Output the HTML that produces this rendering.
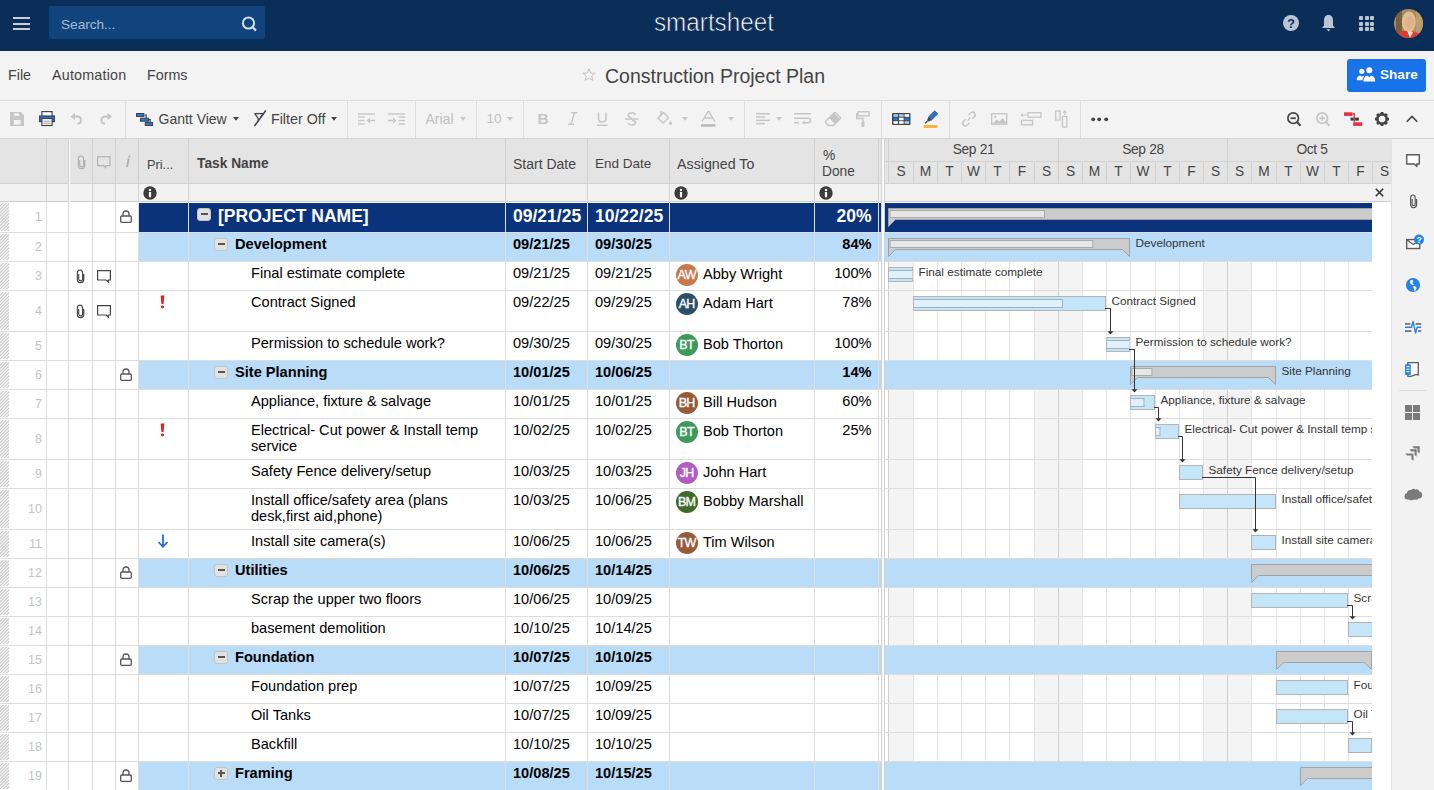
<!DOCTYPE html><html><head><meta charset="utf-8"><style>
*{margin:0;padding:0;box-sizing:border-box}
html,body{width:1434px;height:790px;overflow:hidden;background:#f3f3f3;font-family:"Liberation Sans", sans-serif;}
.a{position:absolute}
.t{position:absolute;white-space:nowrap;}
svg{position:absolute;overflow:visible}
</style></head><body><div style="position:absolute;left:0px;top:0px;width:1434px;height:51px;background:#0a2e58"></div><div style="position:absolute;left:13px;top:17px;width:17px;height:2px;background:#c5ceda"></div><div style="position:absolute;left:13px;top:22.5px;width:17px;height:2px;background:#c5ceda"></div><div style="position:absolute;left:13px;top:28px;width:17px;height:2px;background:#c5ceda"></div><div style="position:absolute;left:49px;top:6px;width:216px;height:33px;background:#11447d;border-radius:2px"></div><div class="t" style="left:61px;top:16px;font-size:13.6px;color:#a9bbd2;line-height:17px">Search...</div><svg style="left:240px;top:15px" width="20" height="20"><circle cx="8.5" cy="8" r="5.6" fill="none" stroke="#d3dbe6" stroke-width="2"/><line x1="12.6" y1="12.2" x2="16" y2="15.6" stroke="#d3dbe6" stroke-width="2.2"/></svg><div class="t" style="left:654px;top:6.82px;font-size:26.5px;color:#ffffff;line-height:30px;transform-origin:0 0;transform:scaleX(0.915);-webkit-text-stroke:0.7px #0a2e58">smartsheet</div><svg style="left:1283px;top:15px" width="16" height="16"><circle cx="8" cy="8" r="8" fill="#b8c5d5"/><text x="8" y="12.6" text-anchor="middle" font-family="Liberation Sans" font-weight="bold" font-size="12.5" fill="#0c2d58">?</text></svg><svg style="left:1321px;top:14px" width="15" height="19"><path d="M7.5 1 C4.2 1 3 3.6 3 6.5 L3 11.5 L1 14 L14 14 L12 11.5 L12 6.5 C12 3.6 10.8 1 7.5 1Z" fill="#b8c5d5"/><path d="M5.5 15.2 L9.5 15.2 L7.5 17.4Z" fill="#b8c5d5"/></svg><div style="position:absolute;left:1359.0px;top:16.0px;width:4px;height:4px;background:#b8c5d5;border-radius:1px"></div><div style="position:absolute;left:1364.7px;top:16.0px;width:4px;height:4px;background:#b8c5d5;border-radius:1px"></div><div style="position:absolute;left:1370.4px;top:16.0px;width:4px;height:4px;background:#b8c5d5;border-radius:1px"></div><div style="position:absolute;left:1359.0px;top:21.6px;width:4px;height:4px;background:#b8c5d5;border-radius:1px"></div><div style="position:absolute;left:1364.7px;top:21.6px;width:4px;height:4px;background:#b8c5d5;border-radius:1px"></div><div style="position:absolute;left:1370.4px;top:21.6px;width:4px;height:4px;background:#b8c5d5;border-radius:1px"></div><div style="position:absolute;left:1359.0px;top:27.2px;width:4px;height:4px;background:#b8c5d5;border-radius:1px"></div><div style="position:absolute;left:1364.7px;top:27.2px;width:4px;height:4px;background:#b8c5d5;border-radius:1px"></div><div style="position:absolute;left:1370.4px;top:27.2px;width:4px;height:4px;background:#b8c5d5;border-radius:1px"></div><svg style="left:1394px;top:8.5px" width="29" height="29"><defs><clipPath id="av"><circle cx="14.5" cy="14.5" r="14.5"/></clipPath></defs><g clip-path="url(#av)"><rect width="29" height="29" fill="#a98b5f"/><rect x="2" y="0" width="6" height="29" fill="#7b5e3e"/><rect x="22" y="0" width="7" height="29" fill="#bd9d6e"/><ellipse cx="14.8" cy="13" rx="7" ry="10.5" fill="#dcc08f"/><ellipse cx="15.8" cy="13.5" rx="4.6" ry="6.2" fill="#e4ae88"/><path d="M2 29 L4.5 23.5 Q9 21 13 22 L15.5 26 L18 22.5 Q23 23 26.5 25 L28 29Z" fill="#e23b35"/><path d="M13.5 22.5 L16 29 L19 23Z" fill="#efe8dc"/></g></svg><div style="position:absolute;left:0px;top:51px;width:1434px;height:49px;background:#f3f3f3"></div><div style="position:absolute;left:0px;top:100px;width:1434px;height:1px;background:#dcdcdc"></div><div class="t" style="left:8px;top:67px;font-size:14.3px;color:#444;line-height:16px;letter-spacing:0px">File</div><div class="t" style="left:52px;top:67px;font-size:14.3px;color:#444;line-height:16px;letter-spacing:0.2px">Automation</div><div class="t" style="left:147px;top:67px;font-size:14.3px;color:#444;line-height:16px;letter-spacing:0px">Forms</div><svg style="left:582px;top:68px" width="14" height="14"><path d="M7 0.8 L8.7 5 L13.2 5.2 L9.7 8 L10.9 12.4 L7 9.9 L3.1 12.4 L4.3 8 L0.8 5.2 L5.3 5Z" fill="none" stroke="#c4c4c4" stroke-width="1"/></svg><div class="t" style="left:605px;top:65px;font-size:19.5px;color:#444;line-height:22px">Construction Project Plan</div><div style="position:absolute;left:1347px;top:59px;width:79px;height:33px;background:#1872e8;border-radius:3px"></div><svg style="left:1356px;top:67px" width="20" height="16"><circle cx="5.8" cy="4.3" r="2.6" fill="#fff"/><path d="M0.6 13.2 Q0.8 9.3 4.2 8.6 L5.8 9.8 L7.2 8.8 Q7.9 9 8.2 9.6 Q6.6 11 6.5 13.2Z" fill="#fff"/><circle cx="13.3" cy="3.2" r="3" fill="#fff"/><path d="M7.4 14.6 Q7.4 9.4 11 8.4 L13.3 10 L15.6 8.4 Q19.2 9.4 19.2 14.6Z" fill="#fff"/></svg><div class="t" style="left:1380px;top:67.29px;font-size:13.6px;font-weight:bold;color:#fff;line-height:16px">Share</div><div style="position:absolute;left:0px;top:101px;width:1434px;height:37px;background:#f3f3f3"></div><div style="position:absolute;left:0px;top:138px;width:1434px;height:1px;background:#d4d4d4"></div><div style="position:absolute;left:125px;top:101px;width:1px;height:37px;background:#dedede"></div><div style="position:absolute;left:347px;top:101px;width:1px;height:37px;background:#dedede"></div><div style="position:absolute;left:415px;top:101px;width:1px;height:37px;background:#dedede"></div><div style="position:absolute;left:476px;top:101px;width:1px;height:37px;background:#dedede"></div><div style="position:absolute;left:523px;top:101px;width:1px;height:37px;background:#dedede"></div><div style="position:absolute;left:744px;top:101px;width:1px;height:37px;background:#dedede"></div><div style="position:absolute;left:881px;top:101px;width:1px;height:37px;background:#dedede"></div><div style="position:absolute;left:949px;top:101px;width:1px;height:37px;background:#dedede"></div><div style="position:absolute;left:1080px;top:101px;width:1px;height:37px;background:#dedede"></div><svg style="left:10px;top:112px" width="15" height="14"><path d="M0 0 H11 L14 3 V14 H0Z" fill="#c6c6c6"/><rect x="4" y="1.3" width="5" height="2.6" fill="#f3f3f3"/><rect x="3.8" y="8" width="6.7" height="4.7" fill="#f3f3f3"/></svg><svg style="left:39px;top:111px" width="16" height="15"><rect x="2.9" y="0.6" width="10.2" height="5" fill="#fff" stroke="#444444" stroke-width="1.2"/><rect x="0.6" y="5" width="14.8" height="5.6" fill="#1f77e0" stroke="#444444" stroke-width="1.2"/><rect x="2.9" y="7.5" width="10.2" height="7" fill="#fff" stroke="#444444" stroke-width="1.2"/><rect x="4.5" y="9.7" width="7" height="1" fill="#999"/><rect x="4.5" y="11.7" width="7" height="1" fill="#999"/></svg><svg style="left:70px;top:113px" width="13" height="12"><path d="M4.5 3.5 H7 Q11 3.5 11 7 Q11 10.5 7.5 10.8" fill="none" stroke="#c6c6c6" stroke-width="2"/><path d="M0.5 3.5 L5 0 V7Z" fill="#c6c6c6"/></svg><svg style="left:100px;top:113px" width="13" height="12"><path d="M8 3.5 H5.5 Q1.5 3.5 1.5 7 Q1.5 10.5 5 10.8" fill="none" stroke="#c6c6c6" stroke-width="2"/><path d="M12 3.5 L7.5 0 V7Z" fill="#c6c6c6"/></svg><svg style="left:136px;top:113px" width="17" height="13"><rect x="0.5" y="0.5" width="7.3" height="3" fill="#1f77e0" stroke="#444444" stroke-width="1"/><rect x="4.5" y="5.2" width="8" height="3" fill="#1f77e0" stroke="#444444" stroke-width="1"/><rect x="9.3" y="9.5" width="7.3" height="3" fill="#1f77e0" stroke="#444444" stroke-width="1"/><path d="M8.2 2 H10.2 V5 M12.8 6.7 H14.2 V9.5" fill="none" stroke="#444444" stroke-width="1.2"/></svg><div class="t" style="left:158.5px;top:111.15px;font-size:14px;line-height:16px;color:#444444">Gantt View</div><svg style="left:232.5px;top:117px" width="6" height="4"><path d="M0 0 H6 L3 3.8Z" fill="#444444"/></svg><svg style="left:253px;top:110px" width="14" height="17"><path d="M1.5 3.6 H10.5" fill="none" stroke="#444444" stroke-width="1.3"/><path d="M1.8 3.6 L5.2 8.5 V12" fill="none" stroke="#444444" stroke-width="1.3"/><path d="M10.3 3.6 L7.6 7.5" fill="none" stroke="#444444" stroke-width="1.3"/><path d="M12.8 0.5 L1.5 16" stroke="#444444" stroke-width="1.5"/></svg><div class="t" style="left:271px;top:111.06px;font-size:14.25px;line-height:16px;color:#444444">Filter Off</div><svg style="left:330.5px;top:117px" width="6" height="4"><path d="M0 0 H6 L3 3.8Z" fill="#444444"/></svg><svg style="left:358px;top:113px" width="18" height="12"><rect x="0" y="0.3" width="17" height="1.4" fill="#c6c6c6"/><rect x="0" y="3.3" width="6.5" height="1.4" fill="#c6c6c6"/><rect x="0" y="6.8" width="6.5" height="1.4" fill="#c6c6c6"/><rect x="0" y="10.3" width="6.5" height="1.4" fill="#c6c6c6"/><path d="M8.5 7.5 L12 4.5 V10.5Z M11.5 6.8 H17 V8.2 H11.5Z" fill="#c6c6c6"/></svg><svg style="left:388px;top:113px" width="18" height="12"><rect x="0" y="0.3" width="17" height="1.4" fill="#c6c6c6"/><rect x="10.5" y="3.3" width="6.5" height="1.4" fill="#c6c6c6"/><rect x="10.5" y="6.8" width="6.5" height="1.4" fill="#c6c6c6"/><rect x="10.5" y="10.3" width="6.5" height="1.4" fill="#c6c6c6"/><path d="M8.5 7.5 L5 4.5 V10.5Z M0 6.8 H5.5 V8.2 H0Z" fill="#c6c6c6"/></svg><div class="t" style="left:425.5px;top:111.15px;font-size:14px;line-height:16px;color:#c0c0c0">Arial</div><svg style="left:459.5px;top:117px" width="6" height="4"><path d="M0 0 H6 L3 3.8Z" fill="#c6c6c6"/></svg><div class="t" style="left:486.5px;top:111.32px;font-size:13.5px;line-height:16px;color:#c0c0c0">10</div><svg style="left:506.5px;top:117px" width="6" height="4"><path d="M0 0 H6 L3 3.8Z" fill="#c6c6c6"/></svg><div class="t" style="left:537.5px;top:110.5px;font-size:15.5px;line-height:16px;color:#c6c6c6;font-weight:bold">B</div><svg style="left:567px;top:112px" width="11" height="13"><path d="M4.5 0.7 H10.5 M1 12.3 H7 M7.5 0.7 L4 12.3" fill="none" stroke="#c6c6c6" stroke-width="1.4"/></svg><svg style="left:597px;top:112px" width="11" height="15"><path d="M1.5 0.5 V6.5 Q1.5 10 5.2 10 Q9 10 9 6.5 V0.5" fill="none" stroke="#c6c6c6" stroke-width="1.5"/><rect x="0" y="12.5" width="10.5" height="1.5" fill="#c6c6c6"/></svg><svg style="left:625px;top:112px" width="14" height="14"><path d="M10.5 2.5 Q9.5 0.8 7 0.8 Q3.2 0.8 3.2 3.3 Q3.2 5.5 7 6 M7 8.2 Q10.6 8.7 10.6 10.5 Q10.6 12.9 7 12.9 Q4 12.9 3 11" fill="none" stroke="#c6c6c6" stroke-width="1.5"/><rect x="0" y="6.4" width="13.5" height="1.4" fill="#c6c6c6"/></svg><svg style="left:656px;top:110px" width="17" height="16"><path d="M2 8 L7.5 2.5 L12.5 7.5 L7 13Z" fill="none" stroke="#c6c6c6" stroke-width="1.5"/><path d="M5 1 V6" stroke="#c6c6c6" stroke-width="1.5"/><path d="M14.5 10.5 Q16 12.5 16 13.3 A1.5 1.5 0 0 1 13 13.3 Q13 12.5 14.5 10.5Z" fill="#c6c6c6"/></svg><svg style="left:682px;top:117px" width="6" height="4"><path d="M0 0 H6 L3 3.8Z" fill="#c6c6c6"/></svg><svg style="left:701px;top:111px" width="15" height="17"><path d="M1 10.5 L6.8 0.8 H8 L13.8 10.5 M3.3 7 H11.5" fill="none" stroke="#c6c6c6" stroke-width="1.4"/><rect x="0" y="13.2" width="14.5" height="2.5" fill="#b8b8b8"/></svg><svg style="left:728px;top:117px" width="6" height="4"><path d="M0 0 H6 L3 3.8Z" fill="#c6c6c6"/></svg><svg style="left:756px;top:113px" width="15" height="12"><rect x="0" y="0" width="14" height="1.5" fill="#c6c6c6"/><rect x="0" y="3.3" width="9" height="1.5" fill="#c6c6c6"/><rect x="0" y="6.6" width="14" height="1.5" fill="#c6c6c6"/><rect x="0" y="9.9" width="9" height="1.5" fill="#c6c6c6"/></svg><svg style="left:776px;top:117px" width="6" height="4"><path d="M0 0 H6 L3 3.8Z" fill="#c6c6c6"/></svg><svg style="left:794px;top:113px" width="19" height="12"><rect x="0" y="0" width="17" height="1.5" fill="#c6c6c6"/><rect x="0" y="4.5" width="11" height="1.5" fill="#c6c6c6"/><rect x="0" y="9" width="5" height="1.5" fill="#c6c6c6"/><path d="M11 5.2 H14 Q16.7 5.2 16.7 7.5 Q16.7 9.8 14 9.8 H9" fill="none" stroke="#c6c6c6" stroke-width="1.4"/><path d="M8 9.8 L10.5 7.5 V12Z" fill="#c6c6c6"/></svg><svg style="left:825px;top:111px" width="17" height="16"><path d="M1 10 L9 2 Q10 1 11 2 L15 6 Q16 7 15 8 L8.5 14.5 H3.5 L1 12 Q0 11 1 10Z" fill="none" stroke="#c6c6c6" stroke-width="1.4"/><path d="M9 2 L15 8 L10 13 L4 7Z" fill="#c6c6c6"/></svg><svg style="left:856px;top:111px" width="14" height="16"><rect x="2" y="0.8" width="11" height="4" fill="none" stroke="#c6c6c6" stroke-width="1.4"/><path d="M2 3 H0.7 V7.5 H7 V10" fill="none" stroke="#c6c6c6" stroke-width="1.4"/><rect x="5.5" y="10" width="3" height="6" rx="1" fill="#c6c6c6"/></svg><svg style="left:892px;top:113px" width="19" height="12"><rect x="0" y="0" width="18.5" height="12" rx="1" fill="#444444"/><rect x="1.4" y="1.2" width="4.6" height="2.6" fill="#a7cdf2"/><rect x="7" y="1.2" width="4.6" height="2.6" fill="#a7cdf2"/><rect x="12.6" y="1.2" width="4.6" height="2.6" fill="#fff"/><rect x="1.4" y="4.7" width="4.6" height="2.6" fill="#1f77e0"/><rect x="7" y="4.7" width="4.6" height="2.6" fill="#fff"/><rect x="12.6" y="4.7" width="4.6" height="2.6" fill="#1f77e0"/><rect x="1.4" y="8.2" width="4.6" height="2.6" fill="#fff"/><rect x="7" y="8.2" width="4.6" height="2.6" fill="#fff"/><rect x="12.6" y="8.2" width="4.6" height="2.6" fill="#a7cdf2"/></svg><svg style="left:923px;top:110px" width="15" height="18"><path d="M11.6 1 L14.6 3.8 L8.2 10.2 L5.2 7.4Z" fill="#1f77e0" stroke="#444444" stroke-width="1" stroke-linejoin="round"/><path d="M5.2 7.4 L8.2 10.2 L6.4 11.2 L4.2 11.6 L4.4 9.4Z" fill="#444444"/><path d="M4.3 11.2 L2 13.2" stroke="#444444" stroke-width="1.2"/><rect x="0.5" y="15" width="14" height="3" rx="1" fill="#f5b53f"/></svg><svg style="left:961px;top:111px" width="16" height="16"><path d="M6.5 9.5 L9.5 6.5" stroke="#c6c6c6" stroke-width="1.5"/><path d="M7.6 4 L9.8 1.8 Q11.5 0.1 13.4 1.9 Q15.2 3.8 13.5 5.5 L11.3 7.7" fill="none" stroke="#c6c6c6" stroke-width="1.5"/><path d="M8.4 12 L6.2 14.2 Q4.5 15.9 2.6 14.1 Q0.8 12.2 2.5 10.5 L4.7 8.3" fill="none" stroke="#c6c6c6" stroke-width="1.5"/></svg><svg style="left:991px;top:113px" width="17" height="12"><rect x="0.7" y="0.7" width="15" height="10.5" fill="none" stroke="#c6c6c6" stroke-width="1.4"/><circle cx="4.3" cy="3.8" r="1.2" fill="#c6c6c6"/><path d="M1.5 10.5 L6 6.5 L8.5 8.5 L11.5 5 L15 9 V10.5Z" fill="#c6c6c6"/></svg><svg style="left:1020px;top:112px" width="22" height="14"><rect x="8" y="0.7" width="13" height="4.5" fill="none" stroke="#c6c6c6" stroke-width="1.3"/><rect x="1.5" y="8.3" width="11" height="4.5" fill="none" stroke="#c6c6c6" stroke-width="1.3"/><path d="M0.5 3 L3 1 V5Z M2.5 2.4 H7 V3.6 H2.5Z" fill="#c6c6c6"/></svg><svg style="left:1055px;top:110px" width="13" height="18"><rect x="0.7" y="1" width="4.3" height="9" fill="none" stroke="#c6c6c6" stroke-width="1.3"/><rect x="7.5" y="6.5" width="4.3" height="10.5" fill="none" stroke="#c6c6c6" stroke-width="1.3"/><path d="M9.7 0 L12 2.8 H7.4Z M9.1 2.5 H10.3 V5 H9.1Z" fill="#c6c6c6"/></svg><svg style="left:1091.0px;top:117px" width="5" height="5"><circle cx="2.2" cy="2.3" r="1.9" fill="#444444"/></svg><svg style="left:1097.3px;top:117px" width="5" height="5"><circle cx="2.2" cy="2.3" r="1.9" fill="#444444"/></svg><svg style="left:1103.6px;top:117px" width="5" height="5"><circle cx="2.2" cy="2.3" r="1.9" fill="#444444"/></svg><svg style="left:1287px;top:112px" width="15" height="16"><circle cx="6.2" cy="6.2" r="5.3" fill="none" stroke="#444444" stroke-width="1.7"/><rect x="3.5" y="5.4" width="5.4" height="1.7" fill="#444444"/><path d="M10 10 L13.5 13.8" stroke="#444444" stroke-width="2"/></svg><svg style="left:1316px;top:112px" width="15" height="16"><circle cx="6.2" cy="6.2" r="5.3" fill="none" stroke="#c6c6c6" stroke-width="1.7"/><rect x="3.5" y="5.4" width="5.4" height="1.7" fill="#c6c6c6"/><rect x="5.35" y="3.5" width="1.7" height="5.4" fill="#c6c6c6"/><path d="M10 10 L13.5 13.8" stroke="#c6c6c6" stroke-width="2"/></svg><svg style="left:1344px;top:112px" width="19" height="15"><rect x="0" y="0.3" width="8.5" height="3.6" fill="#e8303f"/><rect x="6.5" y="5.6" width="8.5" height="3" fill="#444444"/><rect x="9.2" y="10.3" width="9" height="3.6" fill="#e8303f"/><path d="M8.5 2 H10.3 V10.5" fill="none" stroke="#e8303f" stroke-width="1.3"/></svg><svg style="left:1375px;top:112px" width="14" height="14"><rect x="5.6" y="0" width="2.8" height="3.5" fill="#444444" transform="rotate(0 7 7)"/><rect x="5.6" y="0" width="2.8" height="3.5" fill="#444444" transform="rotate(45 7 7)"/><rect x="5.6" y="0" width="2.8" height="3.5" fill="#444444" transform="rotate(90 7 7)"/><rect x="5.6" y="0" width="2.8" height="3.5" fill="#444444" transform="rotate(135 7 7)"/><rect x="5.6" y="0" width="2.8" height="3.5" fill="#444444" transform="rotate(180 7 7)"/><rect x="5.6" y="0" width="2.8" height="3.5" fill="#444444" transform="rotate(225 7 7)"/><rect x="5.6" y="0" width="2.8" height="3.5" fill="#444444" transform="rotate(270 7 7)"/><rect x="5.6" y="0" width="2.8" height="3.5" fill="#444444" transform="rotate(315 7 7)"/><circle cx="7" cy="7" r="4.8" fill="none" stroke="#444444" stroke-width="2.4"/></svg><svg style="left:1406px;top:115px" width="12" height="8"><path d="M0.8 6.8 L6 1.5 L11.2 6.8" fill="none" stroke="#444444" stroke-width="1.6"/></svg><div style="position:absolute;left:0px;top:139px;width:881px;height:44px;background:#e4e4e4"></div><div style="position:absolute;left:0px;top:183px;width:881px;height:1px;background:#d2d2d2"></div><div style="position:absolute;left:0px;top:184px;width:881px;height:17px;background:#f2f2f2"></div><div style="position:absolute;left:0px;top:201px;width:881px;height:1px;background:#cdcdcd"></div><div style="position:absolute;left:46px;top:139px;width:1px;height:62px;background:#d2d2d2"></div><div style="position:absolute;left:68px;top:139px;width:1px;height:62px;background:#d2d2d2"></div><div style="position:absolute;left:92px;top:139px;width:1px;height:62px;background:#d2d2d2"></div><div style="position:absolute;left:115px;top:139px;width:1px;height:62px;background:#d2d2d2"></div><div style="position:absolute;left:138px;top:139px;width:1px;height:62px;background:#d2d2d2"></div><div style="position:absolute;left:188px;top:139px;width:1px;height:62px;background:#d2d2d2"></div><div style="position:absolute;left:505px;top:139px;width:1px;height:62px;background:#d2d2d2"></div><div style="position:absolute;left:587px;top:139px;width:1px;height:62px;background:#d2d2d2"></div><div style="position:absolute;left:669px;top:139px;width:1px;height:62px;background:#d2d2d2"></div><div style="position:absolute;left:814px;top:139px;width:1px;height:62px;background:#d2d2d2"></div><div style="position:absolute;left:878px;top:139px;width:1px;height:62px;background:#d2d2d2"></div><div style="position:absolute;left:69px;top:139px;width:1px;height:651px;background:#ffffff"></div><div class="t" style="left:147px;top:156.58px;font-size:12.75px;line-height:16px;color:#444;font-weight:normal;">Pri...</div><div class="t" style="left:197px;top:156.24px;font-size:13.75px;line-height:16px;color:#444;font-weight:bold;">Task Name</div><div class="t" style="left:513px;top:156.15px;font-size:14px;line-height:16px;color:#444;font-weight:normal;">Start Date</div><div class="t" style="left:595px;top:156.32px;font-size:13.5px;line-height:16px;color:#444;font-weight:normal;">End Date</div><div class="t" style="left:677px;top:156.06px;font-size:14.25px;line-height:16px;color:#444;font-weight:normal;">Assigned To</div><div class="t" style="left:823px;top:148.24px;font-size:13.75px;line-height:16px;color:#444;font-weight:normal;">%</div><div class="t" style="left:822px;top:164.24px;font-size:13.75px;line-height:16px;color:#444;font-weight:normal;">Done</div><svg style="left:143px;top:186px" width="14" height="14"><circle cx="7" cy="7" r="6.7" fill="#3c3c3c"/><circle cx="7" cy="3.9" r="1.2" fill="#fff"/><rect x="5.9" y="5.9" width="2.2" height="5.4" fill="#fff"/></svg><svg style="left:674px;top:186px" width="14" height="14"><circle cx="7" cy="7" r="6.7" fill="#3c3c3c"/><circle cx="7" cy="3.9" r="1.2" fill="#fff"/><rect x="5.9" y="5.9" width="2.2" height="5.4" fill="#fff"/></svg><svg style="left:819px;top:186px" width="14" height="14"><circle cx="7" cy="7" r="6.7" fill="#3c3c3c"/><circle cx="7" cy="3.9" r="1.2" fill="#fff"/><rect x="5.9" y="5.9" width="2.2" height="5.4" fill="#fff"/></svg><svg style="left:76.5px;top:154.5px" width="10" height="15"><path d="M7.8 5 V10.3 Q7.8 13.6 4.6 13.6 Q1.3 13.6 1.3 10.3 V4.2 Q1.3 1 4 1 Q6.6 1 6.6 4.2 V10 Q6.6 11.9 4.6 11.9 Q2.7 11.9 2.7 10 V5" fill="none" stroke="#b0b0b0" stroke-width="1.15"/></svg><svg style="left:97px;top:156px" width="14" height="13"><path d="M0.6 0.6 H12.9 V9.6 H9.1 L8.4 11.8 L6.7 9.6 H0.6Z" fill="none" stroke="#b4b4b4" stroke-width="1.2"/></svg><svg style="left:124px;top:155px" width="7" height="12"><path d="M4.6 4.2 L3.2 11.2" stroke="#b0b0b0" stroke-width="1.9" stroke-linecap="round"/><circle cx="5.3" cy="1.5" r="1.1" fill="#b0b0b0"/></svg><div style="position:absolute;left:0px;top:202px;width:881px;height:30px;background:#fff"></div><div style="position:absolute;left:139px;top:203px;width:742px;height:29px;background:#0a337b"></div><div style="position:absolute;left:0px;top:232px;width:881px;height:1px;background:#dddddd"></div><svg style="left:0;top:203px;overflow:hidden" width="9" height="28"><path d="M-1 1.00 L1.00 -1 M-1 4.25 L4.25 -1 M-1 7.50 L7.50 -1 M-1 10.75 L10.75 -1 M-1 14.00 L14.00 -1 M-1 17.25 L17.25 -1 M-1 20.50 L20.50 -1 M-1 23.75 L23.75 -1 M-1 27.00 L27.00 -1 M-1 30.25 L30.25 -1 M-1 33.50 L33.50 -1 M-1 36.75 L36.75 -1 M-1 40.00 L40.00 -1 M-1 43.25 L43.25 -1 " stroke="#cecece" stroke-width="1.25" fill="none"/></svg><div class="t" style="left:0px;width:42px;text-align:right;top:210.7px;font-size:12.5px;line-height:13px;color:#c4c4c4">1</div><div style="position:absolute;left:46px;top:202px;width:1px;height:30px;background:#dddddd"></div><div style="position:absolute;left:68px;top:202px;width:1px;height:30px;background:#dddddd"></div><div style="position:absolute;left:92px;top:202px;width:1px;height:30px;background:#dddddd"></div><div style="position:absolute;left:115px;top:202px;width:1px;height:30px;background:#dddddd"></div><div style="position:absolute;left:138px;top:202px;width:1px;height:30px;background:#dddddd"></div><div style="position:absolute;left:188px;top:202px;width:1px;height:30px;background:#dddddd"></div><div style="position:absolute;left:505px;top:202px;width:1px;height:30px;background:#dddddd"></div><div style="position:absolute;left:587px;top:202px;width:1px;height:30px;background:#dddddd"></div><div style="position:absolute;left:669px;top:202px;width:1px;height:30px;background:#dddddd"></div><div style="position:absolute;left:814px;top:202px;width:1px;height:30px;background:#dddddd"></div><div style="position:absolute;left:878px;top:202px;width:1px;height:30px;background:#dddddd"></div><div class="t" style="left:218px;top:207.94px;font-size:17.5px;line-height:16px;color:#fff;font-weight:bold;">[PROJECT NAME]</div><div class="t" style="left:513px;top:207.94px;font-size:17.5px;line-height:16px;color:#fff;font-weight:bold;">09/21/25</div><div class="t" style="left:595px;top:207.94px;font-size:17.5px;line-height:16px;color:#fff;font-weight:bold;">10/22/25</div><div class="t" style="left:815px;width:56.5px;text-align:right;top:207.94px;font-size:17.5px;line-height:16px;color:#fff;font-weight:bold">20%</div><div style="position:absolute;left:197px;top:208px;width:14px;height:13px;background:#e2e2e2;border:1px solid #c4c4c4;border-radius:3px"><div style="position:absolute;left:2.5px;top:4.2px;width:7px;height:2px;background:#555"></div></div><svg style="left:120px;top:210.0px" width="12" height="13"><path d="M3 6 V4 Q3 1 6 1 Q9 1 9 4 V6" fill="none" stroke="#555" stroke-width="1.3"/><rect x="0.7" y="6" width="10.6" height="6.3" rx="1" fill="none" stroke="#555" stroke-width="1.3"/></svg><div style="position:absolute;left:0px;top:233px;width:881px;height:28px;background:#fff"></div><div style="position:absolute;left:139px;top:233px;width:742px;height:28px;background:#b9dcf9"></div><div style="position:absolute;left:0px;top:261px;width:881px;height:1px;background:#dddddd"></div><svg style="left:0;top:234px;overflow:hidden" width="9" height="26"><path d="M-1 1.00 L1.00 -1 M-1 4.25 L4.25 -1 M-1 7.50 L7.50 -1 M-1 10.75 L10.75 -1 M-1 14.00 L14.00 -1 M-1 17.25 L17.25 -1 M-1 20.50 L20.50 -1 M-1 23.75 L23.75 -1 M-1 27.00 L27.00 -1 M-1 30.25 L30.25 -1 M-1 33.50 L33.50 -1 M-1 36.75 L36.75 -1 M-1 40.00 L40.00 -1 " stroke="#cecece" stroke-width="1.25" fill="none"/></svg><div class="t" style="left:0px;width:42px;text-align:right;top:240.7px;font-size:12.5px;line-height:13px;color:#c4c4c4">2</div><div style="position:absolute;left:46px;top:233px;width:1px;height:28px;background:#dddddd"></div><div style="position:absolute;left:68px;top:233px;width:1px;height:28px;background:#dddddd"></div><div style="position:absolute;left:92px;top:233px;width:1px;height:28px;background:#dddddd"></div><div style="position:absolute;left:115px;top:233px;width:1px;height:28px;background:#dddddd"></div><div style="position:absolute;left:138px;top:233px;width:1px;height:28px;background:#dddddd"></div><div style="position:absolute;left:188px;top:233px;width:1px;height:28px;background:#dddddd"></div><div style="position:absolute;left:505px;top:233px;width:1px;height:28px;background:#dddddd"></div><div style="position:absolute;left:587px;top:233px;width:1px;height:28px;background:#dddddd"></div><div style="position:absolute;left:669px;top:233px;width:1px;height:28px;background:#dddddd"></div><div style="position:absolute;left:814px;top:233px;width:1px;height:28px;background:#dddddd"></div><div style="position:absolute;left:878px;top:233px;width:1px;height:28px;background:#dddddd"></div><div class="t" style="left:235px;top:235.54px;font-size:14.6px;line-height:16px;color:#000;font-weight:bold;">Development</div><div class="t" style="left:513px;top:235.54px;font-size:14.6px;line-height:16px;color:#000;font-weight:bold;">09/21/25</div><div class="t" style="left:595px;top:235.54px;font-size:14.6px;line-height:16px;color:#000;font-weight:bold;">09/30/25</div><div class="t" style="left:815px;width:56.5px;text-align:right;top:235.54px;font-size:14.6px;line-height:16px;color:#000;font-weight:bold">84%</div><div style="position:absolute;left:214px;top:238px;width:14px;height:13px;background:#e2e2e2;border:1px solid #c4c4c4;border-radius:3px"><div style="position:absolute;left:2.5px;top:4.2px;width:7px;height:2px;background:#555"></div></div><div style="position:absolute;left:0px;top:262px;width:881px;height:28px;background:#fff"></div><div style="position:absolute;left:0px;top:290px;width:881px;height:1px;background:#dddddd"></div><svg style="left:0;top:263px;overflow:hidden" width="9" height="26"><path d="M-1 1.00 L1.00 -1 M-1 4.25 L4.25 -1 M-1 7.50 L7.50 -1 M-1 10.75 L10.75 -1 M-1 14.00 L14.00 -1 M-1 17.25 L17.25 -1 M-1 20.50 L20.50 -1 M-1 23.75 L23.75 -1 M-1 27.00 L27.00 -1 M-1 30.25 L30.25 -1 M-1 33.50 L33.50 -1 M-1 36.75 L36.75 -1 M-1 40.00 L40.00 -1 " stroke="#cecece" stroke-width="1.25" fill="none"/></svg><div class="t" style="left:0px;width:42px;text-align:right;top:269.7px;font-size:12.5px;line-height:13px;color:#c4c4c4">3</div><div style="position:absolute;left:46px;top:262px;width:1px;height:28px;background:#dddddd"></div><div style="position:absolute;left:68px;top:262px;width:1px;height:28px;background:#dddddd"></div><div style="position:absolute;left:92px;top:262px;width:1px;height:28px;background:#dddddd"></div><div style="position:absolute;left:115px;top:262px;width:1px;height:28px;background:#dddddd"></div><div style="position:absolute;left:138px;top:262px;width:1px;height:28px;background:#dddddd"></div><div style="position:absolute;left:188px;top:262px;width:1px;height:28px;background:#dddddd"></div><div style="position:absolute;left:505px;top:262px;width:1px;height:28px;background:#dddddd"></div><div style="position:absolute;left:587px;top:262px;width:1px;height:28px;background:#dddddd"></div><div style="position:absolute;left:669px;top:262px;width:1px;height:28px;background:#dddddd"></div><div style="position:absolute;left:814px;top:262px;width:1px;height:28px;background:#dddddd"></div><div style="position:absolute;left:878px;top:262px;width:1px;height:28px;background:#dddddd"></div><div class="t" style="left:251px;top:265.34px;font-size:14.6px;line-height:16px;color:#000;font-weight:normal;">Final estimate complete</div><div class="t" style="left:513px;top:265.34px;font-size:14.6px;line-height:16px;color:#000;font-weight:normal;">09/21/25</div><div class="t" style="left:595px;top:265.34px;font-size:14.6px;line-height:16px;color:#000;font-weight:normal;">09/21/25</div><div class="t" style="left:815px;width:56.5px;text-align:right;top:265.34px;font-size:14.6px;line-height:16px;color:#000;font-weight:normal">100%</div><div class="a" style="left:676px;top:264px;width:22px;height:22px;border-radius:50%;background:#c8774d;color:#fff;font-size:12.5px;line-height:22px;text-align:center;letter-spacing:-0.7px;text-indent:-0.7px;-webkit-text-stroke:0.35px #fff">AW</div><div class="t" style="left:703px;top:266.14px;font-size:14.6px;line-height:16px;color:#000;font-weight:normal;">Abby Wright</div><svg style="left:76px;top:269.0px" width="10" height="15"><path d="M7.8 5 V10.3 Q7.8 13.6 4.6 13.6 Q1.3 13.6 1.3 10.3 V4.2 Q1.3 1 4 1 Q6.6 1 6.6 4.2 V10 Q6.6 11.9 4.6 11.9 Q2.7 11.9 2.7 10 V5" fill="none" stroke="#444" stroke-width="1.15"/></svg><svg style="left:97px;top:269.5px" width="15" height="14"><path d="M0.6 0.6 H13.4 V10 H11.2 L11.6 12.4 L9 10 H0.6Z" fill="none" stroke="#444" stroke-width="1.2" stroke-linejoin="round"/></svg><div style="position:absolute;left:0px;top:291px;width:881px;height:40px;background:#fff"></div><div style="position:absolute;left:0px;top:331px;width:881px;height:1px;background:#dddddd"></div><svg style="left:0;top:292px;overflow:hidden" width="9" height="38"><path d="M-1 1.00 L1.00 -1 M-1 4.25 L4.25 -1 M-1 7.50 L7.50 -1 M-1 10.75 L10.75 -1 M-1 14.00 L14.00 -1 M-1 17.25 L17.25 -1 M-1 20.50 L20.50 -1 M-1 23.75 L23.75 -1 M-1 27.00 L27.00 -1 M-1 30.25 L30.25 -1 M-1 33.50 L33.50 -1 M-1 36.75 L36.75 -1 M-1 40.00 L40.00 -1 M-1 43.25 L43.25 -1 M-1 46.50 L46.50 -1 M-1 49.75 L49.75 -1 M-1 53.00 L53.00 -1 " stroke="#cecece" stroke-width="1.25" fill="none"/></svg><div class="t" style="left:0px;width:42px;text-align:right;top:304.7px;font-size:12.5px;line-height:13px;color:#c4c4c4">4</div><div style="position:absolute;left:46px;top:291px;width:1px;height:40px;background:#dddddd"></div><div style="position:absolute;left:68px;top:291px;width:1px;height:40px;background:#dddddd"></div><div style="position:absolute;left:92px;top:291px;width:1px;height:40px;background:#dddddd"></div><div style="position:absolute;left:115px;top:291px;width:1px;height:40px;background:#dddddd"></div><div style="position:absolute;left:138px;top:291px;width:1px;height:40px;background:#dddddd"></div><div style="position:absolute;left:188px;top:291px;width:1px;height:40px;background:#dddddd"></div><div style="position:absolute;left:505px;top:291px;width:1px;height:40px;background:#dddddd"></div><div style="position:absolute;left:587px;top:291px;width:1px;height:40px;background:#dddddd"></div><div style="position:absolute;left:669px;top:291px;width:1px;height:40px;background:#dddddd"></div><div style="position:absolute;left:814px;top:291px;width:1px;height:40px;background:#dddddd"></div><div style="position:absolute;left:878px;top:291px;width:1px;height:40px;background:#dddddd"></div><div class="t" style="left:251px;top:294.34px;font-size:14.6px;line-height:16px;color:#000;font-weight:normal;">Contract Signed</div><div class="t" style="left:513px;top:294.34px;font-size:14.6px;line-height:16px;color:#000;font-weight:normal;">09/22/25</div><div class="t" style="left:595px;top:294.34px;font-size:14.6px;line-height:16px;color:#000;font-weight:normal;">09/29/25</div><div class="t" style="left:815px;width:56.5px;text-align:right;top:294.34px;font-size:14.6px;line-height:16px;color:#000;font-weight:normal">78%</div><div class="a" style="left:676px;top:293px;width:22px;height:22px;border-radius:50%;background:#2b4f6b;color:#fff;font-size:12.5px;line-height:22px;text-align:center;letter-spacing:-0.7px;text-indent:-0.7px;-webkit-text-stroke:0.35px #fff">AH</div><div class="t" style="left:703px;top:295.14px;font-size:14.6px;line-height:16px;color:#000;font-weight:normal;">Adam Hart</div><svg style="left:76px;top:304.0px" width="10" height="15"><path d="M7.8 5 V10.3 Q7.8 13.6 4.6 13.6 Q1.3 13.6 1.3 10.3 V4.2 Q1.3 1 4 1 Q6.6 1 6.6 4.2 V10 Q6.6 11.9 4.6 11.9 Q2.7 11.9 2.7 10 V5" fill="none" stroke="#444" stroke-width="1.15"/></svg><svg style="left:97px;top:304.5px" width="15" height="14"><path d="M0.6 0.6 H13.4 V10 H11.2 L11.6 12.4 L9 10 H0.6Z" fill="none" stroke="#444" stroke-width="1.2" stroke-linejoin="round"/></svg><svg style="left:160px;top:295px" width="5" height="14"><path d="M0.6 0.5 H4.4 L3.6 9 H1.4Z" fill="#d42a2a"/><circle cx="2.5" cy="11.8" r="1.6" fill="#d42a2a"/></svg><div style="position:absolute;left:0px;top:332px;width:881px;height:28px;background:#fff"></div><div style="position:absolute;left:0px;top:360px;width:881px;height:1px;background:#dddddd"></div><svg style="left:0;top:333px;overflow:hidden" width="9" height="26"><path d="M-1 1.00 L1.00 -1 M-1 4.25 L4.25 -1 M-1 7.50 L7.50 -1 M-1 10.75 L10.75 -1 M-1 14.00 L14.00 -1 M-1 17.25 L17.25 -1 M-1 20.50 L20.50 -1 M-1 23.75 L23.75 -1 M-1 27.00 L27.00 -1 M-1 30.25 L30.25 -1 M-1 33.50 L33.50 -1 M-1 36.75 L36.75 -1 M-1 40.00 L40.00 -1 " stroke="#cecece" stroke-width="1.25" fill="none"/></svg><div class="t" style="left:0px;width:42px;text-align:right;top:339.7px;font-size:12.5px;line-height:13px;color:#c4c4c4">5</div><div style="position:absolute;left:46px;top:332px;width:1px;height:28px;background:#dddddd"></div><div style="position:absolute;left:68px;top:332px;width:1px;height:28px;background:#dddddd"></div><div style="position:absolute;left:92px;top:332px;width:1px;height:28px;background:#dddddd"></div><div style="position:absolute;left:115px;top:332px;width:1px;height:28px;background:#dddddd"></div><div style="position:absolute;left:138px;top:332px;width:1px;height:28px;background:#dddddd"></div><div style="position:absolute;left:188px;top:332px;width:1px;height:28px;background:#dddddd"></div><div style="position:absolute;left:505px;top:332px;width:1px;height:28px;background:#dddddd"></div><div style="position:absolute;left:587px;top:332px;width:1px;height:28px;background:#dddddd"></div><div style="position:absolute;left:669px;top:332px;width:1px;height:28px;background:#dddddd"></div><div style="position:absolute;left:814px;top:332px;width:1px;height:28px;background:#dddddd"></div><div style="position:absolute;left:878px;top:332px;width:1px;height:28px;background:#dddddd"></div><div class="t" style="left:251px;top:335.34px;font-size:14.6px;line-height:16px;color:#000;font-weight:normal;">Permission to schedule work?</div><div class="t" style="left:513px;top:335.34px;font-size:14.6px;line-height:16px;color:#000;font-weight:normal;">09/30/25</div><div class="t" style="left:595px;top:335.34px;font-size:14.6px;line-height:16px;color:#000;font-weight:normal;">09/30/25</div><div class="t" style="left:815px;width:56.5px;text-align:right;top:335.34px;font-size:14.6px;line-height:16px;color:#000;font-weight:normal">100%</div><div class="a" style="left:676px;top:334px;width:22px;height:22px;border-radius:50%;background:#3d9a5c;color:#fff;font-size:12.5px;line-height:22px;text-align:center;letter-spacing:-0.7px;text-indent:-0.7px;-webkit-text-stroke:0.35px #fff">BT</div><div class="t" style="left:703px;top:336.14px;font-size:14.6px;line-height:16px;color:#000;font-weight:normal;">Bob Thorton</div><div style="position:absolute;left:0px;top:361px;width:881px;height:28px;background:#fff"></div><div style="position:absolute;left:139px;top:361px;width:742px;height:28px;background:#b9dcf9"></div><div style="position:absolute;left:0px;top:389px;width:881px;height:1px;background:#dddddd"></div><svg style="left:0;top:362px;overflow:hidden" width="9" height="26"><path d="M-1 1.00 L1.00 -1 M-1 4.25 L4.25 -1 M-1 7.50 L7.50 -1 M-1 10.75 L10.75 -1 M-1 14.00 L14.00 -1 M-1 17.25 L17.25 -1 M-1 20.50 L20.50 -1 M-1 23.75 L23.75 -1 M-1 27.00 L27.00 -1 M-1 30.25 L30.25 -1 M-1 33.50 L33.50 -1 M-1 36.75 L36.75 -1 M-1 40.00 L40.00 -1 " stroke="#cecece" stroke-width="1.25" fill="none"/></svg><div class="t" style="left:0px;width:42px;text-align:right;top:368.7px;font-size:12.5px;line-height:13px;color:#c4c4c4">6</div><div style="position:absolute;left:46px;top:361px;width:1px;height:28px;background:#dddddd"></div><div style="position:absolute;left:68px;top:361px;width:1px;height:28px;background:#dddddd"></div><div style="position:absolute;left:92px;top:361px;width:1px;height:28px;background:#dddddd"></div><div style="position:absolute;left:115px;top:361px;width:1px;height:28px;background:#dddddd"></div><div style="position:absolute;left:138px;top:361px;width:1px;height:28px;background:#dddddd"></div><div style="position:absolute;left:188px;top:361px;width:1px;height:28px;background:#dddddd"></div><div style="position:absolute;left:505px;top:361px;width:1px;height:28px;background:#dddddd"></div><div style="position:absolute;left:587px;top:361px;width:1px;height:28px;background:#dddddd"></div><div style="position:absolute;left:669px;top:361px;width:1px;height:28px;background:#dddddd"></div><div style="position:absolute;left:814px;top:361px;width:1px;height:28px;background:#dddddd"></div><div style="position:absolute;left:878px;top:361px;width:1px;height:28px;background:#dddddd"></div><div class="t" style="left:235px;top:363.54px;font-size:14.6px;line-height:16px;color:#000;font-weight:bold;">Site Planning</div><div class="t" style="left:513px;top:363.54px;font-size:14.6px;line-height:16px;color:#000;font-weight:bold;">10/01/25</div><div class="t" style="left:595px;top:363.54px;font-size:14.6px;line-height:16px;color:#000;font-weight:bold;">10/06/25</div><div class="t" style="left:815px;width:56.5px;text-align:right;top:363.54px;font-size:14.6px;line-height:16px;color:#000;font-weight:bold">14%</div><div style="position:absolute;left:214px;top:366px;width:14px;height:13px;background:#e2e2e2;border:1px solid #c4c4c4;border-radius:3px"><div style="position:absolute;left:2.5px;top:4.2px;width:7px;height:2px;background:#555"></div></div><svg style="left:120px;top:368.0px" width="12" height="13"><path d="M3 6 V4 Q3 1 6 1 Q9 1 9 4 V6" fill="none" stroke="#555" stroke-width="1.3"/><rect x="0.7" y="6" width="10.6" height="6.3" rx="1" fill="none" stroke="#555" stroke-width="1.3"/></svg><div style="position:absolute;left:0px;top:390px;width:881px;height:28px;background:#fff"></div><div style="position:absolute;left:0px;top:418px;width:881px;height:1px;background:#dddddd"></div><svg style="left:0;top:391px;overflow:hidden" width="9" height="26"><path d="M-1 1.00 L1.00 -1 M-1 4.25 L4.25 -1 M-1 7.50 L7.50 -1 M-1 10.75 L10.75 -1 M-1 14.00 L14.00 -1 M-1 17.25 L17.25 -1 M-1 20.50 L20.50 -1 M-1 23.75 L23.75 -1 M-1 27.00 L27.00 -1 M-1 30.25 L30.25 -1 M-1 33.50 L33.50 -1 M-1 36.75 L36.75 -1 M-1 40.00 L40.00 -1 " stroke="#cecece" stroke-width="1.25" fill="none"/></svg><div class="t" style="left:0px;width:42px;text-align:right;top:397.7px;font-size:12.5px;line-height:13px;color:#c4c4c4">7</div><div style="position:absolute;left:46px;top:390px;width:1px;height:28px;background:#dddddd"></div><div style="position:absolute;left:68px;top:390px;width:1px;height:28px;background:#dddddd"></div><div style="position:absolute;left:92px;top:390px;width:1px;height:28px;background:#dddddd"></div><div style="position:absolute;left:115px;top:390px;width:1px;height:28px;background:#dddddd"></div><div style="position:absolute;left:138px;top:390px;width:1px;height:28px;background:#dddddd"></div><div style="position:absolute;left:188px;top:390px;width:1px;height:28px;background:#dddddd"></div><div style="position:absolute;left:505px;top:390px;width:1px;height:28px;background:#dddddd"></div><div style="position:absolute;left:587px;top:390px;width:1px;height:28px;background:#dddddd"></div><div style="position:absolute;left:669px;top:390px;width:1px;height:28px;background:#dddddd"></div><div style="position:absolute;left:814px;top:390px;width:1px;height:28px;background:#dddddd"></div><div style="position:absolute;left:878px;top:390px;width:1px;height:28px;background:#dddddd"></div><div class="t" style="left:251px;top:393.34px;font-size:14.6px;line-height:16px;color:#000;font-weight:normal;">Appliance, fixture &amp; salvage</div><div class="t" style="left:513px;top:393.34px;font-size:14.6px;line-height:16px;color:#000;font-weight:normal;">10/01/25</div><div class="t" style="left:595px;top:393.34px;font-size:14.6px;line-height:16px;color:#000;font-weight:normal;">10/01/25</div><div class="t" style="left:815px;width:56.5px;text-align:right;top:393.34px;font-size:14.6px;line-height:16px;color:#000;font-weight:normal">60%</div><div class="a" style="left:676px;top:392px;width:22px;height:22px;border-radius:50%;background:#985a3a;color:#fff;font-size:12.5px;line-height:22px;text-align:center;letter-spacing:-0.7px;text-indent:-0.7px;-webkit-text-stroke:0.35px #fff">BH</div><div class="t" style="left:703px;top:394.14px;font-size:14.6px;line-height:16px;color:#000;font-weight:normal;">Bill Hudson</div><div style="position:absolute;left:0px;top:419px;width:881px;height:40px;background:#fff"></div><div style="position:absolute;left:0px;top:459px;width:881px;height:1px;background:#dddddd"></div><svg style="left:0;top:420px;overflow:hidden" width="9" height="38"><path d="M-1 1.00 L1.00 -1 M-1 4.25 L4.25 -1 M-1 7.50 L7.50 -1 M-1 10.75 L10.75 -1 M-1 14.00 L14.00 -1 M-1 17.25 L17.25 -1 M-1 20.50 L20.50 -1 M-1 23.75 L23.75 -1 M-1 27.00 L27.00 -1 M-1 30.25 L30.25 -1 M-1 33.50 L33.50 -1 M-1 36.75 L36.75 -1 M-1 40.00 L40.00 -1 M-1 43.25 L43.25 -1 M-1 46.50 L46.50 -1 M-1 49.75 L49.75 -1 M-1 53.00 L53.00 -1 " stroke="#cecece" stroke-width="1.25" fill="none"/></svg><div class="t" style="left:0px;width:42px;text-align:right;top:432.7px;font-size:12.5px;line-height:13px;color:#c4c4c4">8</div><div style="position:absolute;left:46px;top:419px;width:1px;height:40px;background:#dddddd"></div><div style="position:absolute;left:68px;top:419px;width:1px;height:40px;background:#dddddd"></div><div style="position:absolute;left:92px;top:419px;width:1px;height:40px;background:#dddddd"></div><div style="position:absolute;left:115px;top:419px;width:1px;height:40px;background:#dddddd"></div><div style="position:absolute;left:138px;top:419px;width:1px;height:40px;background:#dddddd"></div><div style="position:absolute;left:188px;top:419px;width:1px;height:40px;background:#dddddd"></div><div style="position:absolute;left:505px;top:419px;width:1px;height:40px;background:#dddddd"></div><div style="position:absolute;left:587px;top:419px;width:1px;height:40px;background:#dddddd"></div><div style="position:absolute;left:669px;top:419px;width:1px;height:40px;background:#dddddd"></div><div style="position:absolute;left:814px;top:419px;width:1px;height:40px;background:#dddddd"></div><div style="position:absolute;left:878px;top:419px;width:1px;height:40px;background:#dddddd"></div><div class="t" style="left:251px;top:422.34px;font-size:14.6px;line-height:16px;color:#000;font-weight:normal;">Electrical- Cut power &amp; Install temp<br>service</div><div class="t" style="left:513px;top:422.34px;font-size:14.6px;line-height:16px;color:#000;font-weight:normal;">10/02/25</div><div class="t" style="left:595px;top:422.34px;font-size:14.6px;line-height:16px;color:#000;font-weight:normal;">10/02/25</div><div class="t" style="left:815px;width:56.5px;text-align:right;top:422.34px;font-size:14.6px;line-height:16px;color:#000;font-weight:normal">25%</div><div class="a" style="left:676px;top:421px;width:22px;height:22px;border-radius:50%;background:#3d9a5c;color:#fff;font-size:12.5px;line-height:22px;text-align:center;letter-spacing:-0.7px;text-indent:-0.7px;-webkit-text-stroke:0.35px #fff">BT</div><div class="t" style="left:703px;top:423.14px;font-size:14.6px;line-height:16px;color:#000;font-weight:normal;">Bob Thorton</div><svg style="left:160px;top:423px" width="5" height="14"><path d="M0.6 0.5 H4.4 L3.6 9 H1.4Z" fill="#d42a2a"/><circle cx="2.5" cy="11.8" r="1.6" fill="#d42a2a"/></svg><div style="position:absolute;left:0px;top:460px;width:881px;height:28px;background:#fff"></div><div style="position:absolute;left:0px;top:488px;width:881px;height:1px;background:#dddddd"></div><svg style="left:0;top:461px;overflow:hidden" width="9" height="26"><path d="M-1 1.00 L1.00 -1 M-1 4.25 L4.25 -1 M-1 7.50 L7.50 -1 M-1 10.75 L10.75 -1 M-1 14.00 L14.00 -1 M-1 17.25 L17.25 -1 M-1 20.50 L20.50 -1 M-1 23.75 L23.75 -1 M-1 27.00 L27.00 -1 M-1 30.25 L30.25 -1 M-1 33.50 L33.50 -1 M-1 36.75 L36.75 -1 M-1 40.00 L40.00 -1 " stroke="#cecece" stroke-width="1.25" fill="none"/></svg><div class="t" style="left:0px;width:42px;text-align:right;top:467.7px;font-size:12.5px;line-height:13px;color:#c4c4c4">9</div><div style="position:absolute;left:46px;top:460px;width:1px;height:28px;background:#dddddd"></div><div style="position:absolute;left:68px;top:460px;width:1px;height:28px;background:#dddddd"></div><div style="position:absolute;left:92px;top:460px;width:1px;height:28px;background:#dddddd"></div><div style="position:absolute;left:115px;top:460px;width:1px;height:28px;background:#dddddd"></div><div style="position:absolute;left:138px;top:460px;width:1px;height:28px;background:#dddddd"></div><div style="position:absolute;left:188px;top:460px;width:1px;height:28px;background:#dddddd"></div><div style="position:absolute;left:505px;top:460px;width:1px;height:28px;background:#dddddd"></div><div style="position:absolute;left:587px;top:460px;width:1px;height:28px;background:#dddddd"></div><div style="position:absolute;left:669px;top:460px;width:1px;height:28px;background:#dddddd"></div><div style="position:absolute;left:814px;top:460px;width:1px;height:28px;background:#dddddd"></div><div style="position:absolute;left:878px;top:460px;width:1px;height:28px;background:#dddddd"></div><div class="t" style="left:251px;top:463.34px;font-size:14.6px;line-height:16px;color:#000;font-weight:normal;">Safety Fence delivery/setup</div><div class="t" style="left:513px;top:463.34px;font-size:14.6px;line-height:16px;color:#000;font-weight:normal;">10/03/25</div><div class="t" style="left:595px;top:463.34px;font-size:14.6px;line-height:16px;color:#000;font-weight:normal;">10/03/25</div><div class="a" style="left:676px;top:462px;width:22px;height:22px;border-radius:50%;background:#b25cc0;color:#fff;font-size:12.5px;line-height:22px;text-align:center;letter-spacing:-0.7px;text-indent:-0.7px;-webkit-text-stroke:0.35px #fff">JH</div><div class="t" style="left:703px;top:464.14px;font-size:14.6px;line-height:16px;color:#000;font-weight:normal;">John Hart</div><div style="position:absolute;left:0px;top:489px;width:881px;height:40px;background:#fff"></div><div style="position:absolute;left:0px;top:529px;width:881px;height:1px;background:#dddddd"></div><svg style="left:0;top:490px;overflow:hidden" width="9" height="38"><path d="M-1 1.00 L1.00 -1 M-1 4.25 L4.25 -1 M-1 7.50 L7.50 -1 M-1 10.75 L10.75 -1 M-1 14.00 L14.00 -1 M-1 17.25 L17.25 -1 M-1 20.50 L20.50 -1 M-1 23.75 L23.75 -1 M-1 27.00 L27.00 -1 M-1 30.25 L30.25 -1 M-1 33.50 L33.50 -1 M-1 36.75 L36.75 -1 M-1 40.00 L40.00 -1 M-1 43.25 L43.25 -1 M-1 46.50 L46.50 -1 M-1 49.75 L49.75 -1 M-1 53.00 L53.00 -1 " stroke="#cecece" stroke-width="1.25" fill="none"/></svg><div class="t" style="left:0px;width:42px;text-align:right;top:502.7px;font-size:12.5px;line-height:13px;color:#c4c4c4">10</div><div style="position:absolute;left:46px;top:489px;width:1px;height:40px;background:#dddddd"></div><div style="position:absolute;left:68px;top:489px;width:1px;height:40px;background:#dddddd"></div><div style="position:absolute;left:92px;top:489px;width:1px;height:40px;background:#dddddd"></div><div style="position:absolute;left:115px;top:489px;width:1px;height:40px;background:#dddddd"></div><div style="position:absolute;left:138px;top:489px;width:1px;height:40px;background:#dddddd"></div><div style="position:absolute;left:188px;top:489px;width:1px;height:40px;background:#dddddd"></div><div style="position:absolute;left:505px;top:489px;width:1px;height:40px;background:#dddddd"></div><div style="position:absolute;left:587px;top:489px;width:1px;height:40px;background:#dddddd"></div><div style="position:absolute;left:669px;top:489px;width:1px;height:40px;background:#dddddd"></div><div style="position:absolute;left:814px;top:489px;width:1px;height:40px;background:#dddddd"></div><div style="position:absolute;left:878px;top:489px;width:1px;height:40px;background:#dddddd"></div><div class="t" style="left:251px;top:492.34px;font-size:14.6px;line-height:16px;color:#000;font-weight:normal;">Install office/safety area (plans<br>desk,first aid,phone)</div><div class="t" style="left:513px;top:492.34px;font-size:14.6px;line-height:16px;color:#000;font-weight:normal;">10/03/25</div><div class="t" style="left:595px;top:492.34px;font-size:14.6px;line-height:16px;color:#000;font-weight:normal;">10/06/25</div><div class="a" style="left:676px;top:491px;width:22px;height:22px;border-radius:50%;background:#3f6a2c;color:#fff;font-size:12.5px;line-height:22px;text-align:center;letter-spacing:-0.7px;text-indent:-0.7px;-webkit-text-stroke:0.35px #fff">BM</div><div class="t" style="left:703px;top:493.14px;font-size:14.6px;line-height:16px;color:#000;font-weight:normal;">Bobby Marshall</div><div style="position:absolute;left:0px;top:530px;width:881px;height:28px;background:#fff"></div><div style="position:absolute;left:0px;top:558px;width:881px;height:1px;background:#dddddd"></div><svg style="left:0;top:531px;overflow:hidden" width="9" height="26"><path d="M-1 1.00 L1.00 -1 M-1 4.25 L4.25 -1 M-1 7.50 L7.50 -1 M-1 10.75 L10.75 -1 M-1 14.00 L14.00 -1 M-1 17.25 L17.25 -1 M-1 20.50 L20.50 -1 M-1 23.75 L23.75 -1 M-1 27.00 L27.00 -1 M-1 30.25 L30.25 -1 M-1 33.50 L33.50 -1 M-1 36.75 L36.75 -1 M-1 40.00 L40.00 -1 " stroke="#cecece" stroke-width="1.25" fill="none"/></svg><div class="t" style="left:0px;width:42px;text-align:right;top:537.7px;font-size:12.5px;line-height:13px;color:#c4c4c4">11</div><div style="position:absolute;left:46px;top:530px;width:1px;height:28px;background:#dddddd"></div><div style="position:absolute;left:68px;top:530px;width:1px;height:28px;background:#dddddd"></div><div style="position:absolute;left:92px;top:530px;width:1px;height:28px;background:#dddddd"></div><div style="position:absolute;left:115px;top:530px;width:1px;height:28px;background:#dddddd"></div><div style="position:absolute;left:138px;top:530px;width:1px;height:28px;background:#dddddd"></div><div style="position:absolute;left:188px;top:530px;width:1px;height:28px;background:#dddddd"></div><div style="position:absolute;left:505px;top:530px;width:1px;height:28px;background:#dddddd"></div><div style="position:absolute;left:587px;top:530px;width:1px;height:28px;background:#dddddd"></div><div style="position:absolute;left:669px;top:530px;width:1px;height:28px;background:#dddddd"></div><div style="position:absolute;left:814px;top:530px;width:1px;height:28px;background:#dddddd"></div><div style="position:absolute;left:878px;top:530px;width:1px;height:28px;background:#dddddd"></div><div class="t" style="left:251px;top:533.34px;font-size:14.6px;line-height:16px;color:#000;font-weight:normal;">Install site camera(s)</div><div class="t" style="left:513px;top:533.34px;font-size:14.6px;line-height:16px;color:#000;font-weight:normal;">10/06/25</div><div class="t" style="left:595px;top:533.34px;font-size:14.6px;line-height:16px;color:#000;font-weight:normal;">10/06/25</div><div class="a" style="left:676px;top:532px;width:22px;height:22px;border-radius:50%;background:#985a3a;color:#fff;font-size:12.5px;line-height:22px;text-align:center;letter-spacing:-0.7px;text-indent:-0.7px;-webkit-text-stroke:0.35px #fff">TW</div><div class="t" style="left:703px;top:534.14px;font-size:14.6px;line-height:16px;color:#000;font-weight:normal;">Tim Wilson</div><svg style="left:157px;top:534px" width="12" height="15"><path d="M6 0.5 V12.5 M1.5 8 L6 12.8 L10.5 8" fill="none" stroke="#1f6fe0" stroke-width="1.8"/></svg><div style="position:absolute;left:0px;top:559px;width:881px;height:28px;background:#fff"></div><div style="position:absolute;left:139px;top:559px;width:742px;height:28px;background:#b9dcf9"></div><div style="position:absolute;left:0px;top:587px;width:881px;height:1px;background:#dddddd"></div><svg style="left:0;top:560px;overflow:hidden" width="9" height="26"><path d="M-1 1.00 L1.00 -1 M-1 4.25 L4.25 -1 M-1 7.50 L7.50 -1 M-1 10.75 L10.75 -1 M-1 14.00 L14.00 -1 M-1 17.25 L17.25 -1 M-1 20.50 L20.50 -1 M-1 23.75 L23.75 -1 M-1 27.00 L27.00 -1 M-1 30.25 L30.25 -1 M-1 33.50 L33.50 -1 M-1 36.75 L36.75 -1 M-1 40.00 L40.00 -1 " stroke="#cecece" stroke-width="1.25" fill="none"/></svg><div class="t" style="left:0px;width:42px;text-align:right;top:566.7px;font-size:12.5px;line-height:13px;color:#c4c4c4">12</div><div style="position:absolute;left:46px;top:559px;width:1px;height:28px;background:#dddddd"></div><div style="position:absolute;left:68px;top:559px;width:1px;height:28px;background:#dddddd"></div><div style="position:absolute;left:92px;top:559px;width:1px;height:28px;background:#dddddd"></div><div style="position:absolute;left:115px;top:559px;width:1px;height:28px;background:#dddddd"></div><div style="position:absolute;left:138px;top:559px;width:1px;height:28px;background:#dddddd"></div><div style="position:absolute;left:188px;top:559px;width:1px;height:28px;background:#dddddd"></div><div style="position:absolute;left:505px;top:559px;width:1px;height:28px;background:#dddddd"></div><div style="position:absolute;left:587px;top:559px;width:1px;height:28px;background:#dddddd"></div><div style="position:absolute;left:669px;top:559px;width:1px;height:28px;background:#dddddd"></div><div style="position:absolute;left:814px;top:559px;width:1px;height:28px;background:#dddddd"></div><div style="position:absolute;left:878px;top:559px;width:1px;height:28px;background:#dddddd"></div><div class="t" style="left:235px;top:561.54px;font-size:14.6px;line-height:16px;color:#000;font-weight:bold;">Utilities</div><div class="t" style="left:513px;top:561.54px;font-size:14.6px;line-height:16px;color:#000;font-weight:bold;">10/06/25</div><div class="t" style="left:595px;top:561.54px;font-size:14.6px;line-height:16px;color:#000;font-weight:bold;">10/14/25</div><div style="position:absolute;left:214px;top:564px;width:14px;height:13px;background:#e2e2e2;border:1px solid #c4c4c4;border-radius:3px"><div style="position:absolute;left:2.5px;top:4.2px;width:7px;height:2px;background:#555"></div></div><svg style="left:120px;top:566.0px" width="12" height="13"><path d="M3 6 V4 Q3 1 6 1 Q9 1 9 4 V6" fill="none" stroke="#555" stroke-width="1.3"/><rect x="0.7" y="6" width="10.6" height="6.3" rx="1" fill="none" stroke="#555" stroke-width="1.3"/></svg><div style="position:absolute;left:0px;top:588px;width:881px;height:28px;background:#fff"></div><div style="position:absolute;left:0px;top:616px;width:881px;height:1px;background:#dddddd"></div><svg style="left:0;top:589px;overflow:hidden" width="9" height="26"><path d="M-1 1.00 L1.00 -1 M-1 4.25 L4.25 -1 M-1 7.50 L7.50 -1 M-1 10.75 L10.75 -1 M-1 14.00 L14.00 -1 M-1 17.25 L17.25 -1 M-1 20.50 L20.50 -1 M-1 23.75 L23.75 -1 M-1 27.00 L27.00 -1 M-1 30.25 L30.25 -1 M-1 33.50 L33.50 -1 M-1 36.75 L36.75 -1 M-1 40.00 L40.00 -1 " stroke="#cecece" stroke-width="1.25" fill="none"/></svg><div class="t" style="left:0px;width:42px;text-align:right;top:595.7px;font-size:12.5px;line-height:13px;color:#c4c4c4">13</div><div style="position:absolute;left:46px;top:588px;width:1px;height:28px;background:#dddddd"></div><div style="position:absolute;left:68px;top:588px;width:1px;height:28px;background:#dddddd"></div><div style="position:absolute;left:92px;top:588px;width:1px;height:28px;background:#dddddd"></div><div style="position:absolute;left:115px;top:588px;width:1px;height:28px;background:#dddddd"></div><div style="position:absolute;left:138px;top:588px;width:1px;height:28px;background:#dddddd"></div><div style="position:absolute;left:188px;top:588px;width:1px;height:28px;background:#dddddd"></div><div style="position:absolute;left:505px;top:588px;width:1px;height:28px;background:#dddddd"></div><div style="position:absolute;left:587px;top:588px;width:1px;height:28px;background:#dddddd"></div><div style="position:absolute;left:669px;top:588px;width:1px;height:28px;background:#dddddd"></div><div style="position:absolute;left:814px;top:588px;width:1px;height:28px;background:#dddddd"></div><div style="position:absolute;left:878px;top:588px;width:1px;height:28px;background:#dddddd"></div><div class="t" style="left:251px;top:591.34px;font-size:14.6px;line-height:16px;color:#000;font-weight:normal;">Scrap the upper two floors</div><div class="t" style="left:513px;top:591.34px;font-size:14.6px;line-height:16px;color:#000;font-weight:normal;">10/06/25</div><div class="t" style="left:595px;top:591.34px;font-size:14.6px;line-height:16px;color:#000;font-weight:normal;">10/09/25</div><div style="position:absolute;left:0px;top:617px;width:881px;height:28px;background:#fff"></div><div style="position:absolute;left:0px;top:645px;width:881px;height:1px;background:#dddddd"></div><svg style="left:0;top:618px;overflow:hidden" width="9" height="26"><path d="M-1 1.00 L1.00 -1 M-1 4.25 L4.25 -1 M-1 7.50 L7.50 -1 M-1 10.75 L10.75 -1 M-1 14.00 L14.00 -1 M-1 17.25 L17.25 -1 M-1 20.50 L20.50 -1 M-1 23.75 L23.75 -1 M-1 27.00 L27.00 -1 M-1 30.25 L30.25 -1 M-1 33.50 L33.50 -1 M-1 36.75 L36.75 -1 M-1 40.00 L40.00 -1 " stroke="#cecece" stroke-width="1.25" fill="none"/></svg><div class="t" style="left:0px;width:42px;text-align:right;top:624.7px;font-size:12.5px;line-height:13px;color:#c4c4c4">14</div><div style="position:absolute;left:46px;top:617px;width:1px;height:28px;background:#dddddd"></div><div style="position:absolute;left:68px;top:617px;width:1px;height:28px;background:#dddddd"></div><div style="position:absolute;left:92px;top:617px;width:1px;height:28px;background:#dddddd"></div><div style="position:absolute;left:115px;top:617px;width:1px;height:28px;background:#dddddd"></div><div style="position:absolute;left:138px;top:617px;width:1px;height:28px;background:#dddddd"></div><div style="position:absolute;left:188px;top:617px;width:1px;height:28px;background:#dddddd"></div><div style="position:absolute;left:505px;top:617px;width:1px;height:28px;background:#dddddd"></div><div style="position:absolute;left:587px;top:617px;width:1px;height:28px;background:#dddddd"></div><div style="position:absolute;left:669px;top:617px;width:1px;height:28px;background:#dddddd"></div><div style="position:absolute;left:814px;top:617px;width:1px;height:28px;background:#dddddd"></div><div style="position:absolute;left:878px;top:617px;width:1px;height:28px;background:#dddddd"></div><div class="t" style="left:251px;top:620.34px;font-size:14.6px;line-height:16px;color:#000;font-weight:normal;">basement demolition</div><div class="t" style="left:513px;top:620.34px;font-size:14.6px;line-height:16px;color:#000;font-weight:normal;">10/10/25</div><div class="t" style="left:595px;top:620.34px;font-size:14.6px;line-height:16px;color:#000;font-weight:normal;">10/14/25</div><div style="position:absolute;left:0px;top:646px;width:881px;height:28px;background:#fff"></div><div style="position:absolute;left:139px;top:646px;width:742px;height:28px;background:#b9dcf9"></div><div style="position:absolute;left:0px;top:674px;width:881px;height:1px;background:#dddddd"></div><svg style="left:0;top:647px;overflow:hidden" width="9" height="26"><path d="M-1 1.00 L1.00 -1 M-1 4.25 L4.25 -1 M-1 7.50 L7.50 -1 M-1 10.75 L10.75 -1 M-1 14.00 L14.00 -1 M-1 17.25 L17.25 -1 M-1 20.50 L20.50 -1 M-1 23.75 L23.75 -1 M-1 27.00 L27.00 -1 M-1 30.25 L30.25 -1 M-1 33.50 L33.50 -1 M-1 36.75 L36.75 -1 M-1 40.00 L40.00 -1 " stroke="#cecece" stroke-width="1.25" fill="none"/></svg><div class="t" style="left:0px;width:42px;text-align:right;top:653.7px;font-size:12.5px;line-height:13px;color:#c4c4c4">15</div><div style="position:absolute;left:46px;top:646px;width:1px;height:28px;background:#dddddd"></div><div style="position:absolute;left:68px;top:646px;width:1px;height:28px;background:#dddddd"></div><div style="position:absolute;left:92px;top:646px;width:1px;height:28px;background:#dddddd"></div><div style="position:absolute;left:115px;top:646px;width:1px;height:28px;background:#dddddd"></div><div style="position:absolute;left:138px;top:646px;width:1px;height:28px;background:#dddddd"></div><div style="position:absolute;left:188px;top:646px;width:1px;height:28px;background:#dddddd"></div><div style="position:absolute;left:505px;top:646px;width:1px;height:28px;background:#dddddd"></div><div style="position:absolute;left:587px;top:646px;width:1px;height:28px;background:#dddddd"></div><div style="position:absolute;left:669px;top:646px;width:1px;height:28px;background:#dddddd"></div><div style="position:absolute;left:814px;top:646px;width:1px;height:28px;background:#dddddd"></div><div style="position:absolute;left:878px;top:646px;width:1px;height:28px;background:#dddddd"></div><div class="t" style="left:235px;top:648.54px;font-size:14.6px;line-height:16px;color:#000;font-weight:bold;">Foundation</div><div class="t" style="left:513px;top:648.54px;font-size:14.6px;line-height:16px;color:#000;font-weight:bold;">10/07/25</div><div class="t" style="left:595px;top:648.54px;font-size:14.6px;line-height:16px;color:#000;font-weight:bold;">10/10/25</div><div style="position:absolute;left:214px;top:651px;width:14px;height:13px;background:#e2e2e2;border:1px solid #c4c4c4;border-radius:3px"><div style="position:absolute;left:2.5px;top:4.2px;width:7px;height:2px;background:#555"></div></div><svg style="left:120px;top:653.0px" width="12" height="13"><path d="M3 6 V4 Q3 1 6 1 Q9 1 9 4 V6" fill="none" stroke="#555" stroke-width="1.3"/><rect x="0.7" y="6" width="10.6" height="6.3" rx="1" fill="none" stroke="#555" stroke-width="1.3"/></svg><div style="position:absolute;left:0px;top:675px;width:881px;height:28px;background:#fff"></div><div style="position:absolute;left:0px;top:703px;width:881px;height:1px;background:#dddddd"></div><svg style="left:0;top:676px;overflow:hidden" width="9" height="26"><path d="M-1 1.00 L1.00 -1 M-1 4.25 L4.25 -1 M-1 7.50 L7.50 -1 M-1 10.75 L10.75 -1 M-1 14.00 L14.00 -1 M-1 17.25 L17.25 -1 M-1 20.50 L20.50 -1 M-1 23.75 L23.75 -1 M-1 27.00 L27.00 -1 M-1 30.25 L30.25 -1 M-1 33.50 L33.50 -1 M-1 36.75 L36.75 -1 M-1 40.00 L40.00 -1 " stroke="#cecece" stroke-width="1.25" fill="none"/></svg><div class="t" style="left:0px;width:42px;text-align:right;top:682.7px;font-size:12.5px;line-height:13px;color:#c4c4c4">16</div><div style="position:absolute;left:46px;top:675px;width:1px;height:28px;background:#dddddd"></div><div style="position:absolute;left:68px;top:675px;width:1px;height:28px;background:#dddddd"></div><div style="position:absolute;left:92px;top:675px;width:1px;height:28px;background:#dddddd"></div><div style="position:absolute;left:115px;top:675px;width:1px;height:28px;background:#dddddd"></div><div style="position:absolute;left:138px;top:675px;width:1px;height:28px;background:#dddddd"></div><div style="position:absolute;left:188px;top:675px;width:1px;height:28px;background:#dddddd"></div><div style="position:absolute;left:505px;top:675px;width:1px;height:28px;background:#dddddd"></div><div style="position:absolute;left:587px;top:675px;width:1px;height:28px;background:#dddddd"></div><div style="position:absolute;left:669px;top:675px;width:1px;height:28px;background:#dddddd"></div><div style="position:absolute;left:814px;top:675px;width:1px;height:28px;background:#dddddd"></div><div style="position:absolute;left:878px;top:675px;width:1px;height:28px;background:#dddddd"></div><div class="t" style="left:251px;top:678.34px;font-size:14.6px;line-height:16px;color:#000;font-weight:normal;">Foundation prep</div><div class="t" style="left:513px;top:678.34px;font-size:14.6px;line-height:16px;color:#000;font-weight:normal;">10/07/25</div><div class="t" style="left:595px;top:678.34px;font-size:14.6px;line-height:16px;color:#000;font-weight:normal;">10/09/25</div><div style="position:absolute;left:0px;top:704px;width:881px;height:28px;background:#fff"></div><div style="position:absolute;left:0px;top:732px;width:881px;height:1px;background:#dddddd"></div><svg style="left:0;top:705px;overflow:hidden" width="9" height="26"><path d="M-1 1.00 L1.00 -1 M-1 4.25 L4.25 -1 M-1 7.50 L7.50 -1 M-1 10.75 L10.75 -1 M-1 14.00 L14.00 -1 M-1 17.25 L17.25 -1 M-1 20.50 L20.50 -1 M-1 23.75 L23.75 -1 M-1 27.00 L27.00 -1 M-1 30.25 L30.25 -1 M-1 33.50 L33.50 -1 M-1 36.75 L36.75 -1 M-1 40.00 L40.00 -1 " stroke="#cecece" stroke-width="1.25" fill="none"/></svg><div class="t" style="left:0px;width:42px;text-align:right;top:711.7px;font-size:12.5px;line-height:13px;color:#c4c4c4">17</div><div style="position:absolute;left:46px;top:704px;width:1px;height:28px;background:#dddddd"></div><div style="position:absolute;left:68px;top:704px;width:1px;height:28px;background:#dddddd"></div><div style="position:absolute;left:92px;top:704px;width:1px;height:28px;background:#dddddd"></div><div style="position:absolute;left:115px;top:704px;width:1px;height:28px;background:#dddddd"></div><div style="position:absolute;left:138px;top:704px;width:1px;height:28px;background:#dddddd"></div><div style="position:absolute;left:188px;top:704px;width:1px;height:28px;background:#dddddd"></div><div style="position:absolute;left:505px;top:704px;width:1px;height:28px;background:#dddddd"></div><div style="position:absolute;left:587px;top:704px;width:1px;height:28px;background:#dddddd"></div><div style="position:absolute;left:669px;top:704px;width:1px;height:28px;background:#dddddd"></div><div style="position:absolute;left:814px;top:704px;width:1px;height:28px;background:#dddddd"></div><div style="position:absolute;left:878px;top:704px;width:1px;height:28px;background:#dddddd"></div><div class="t" style="left:251px;top:707.34px;font-size:14.6px;line-height:16px;color:#000;font-weight:normal;">Oil Tanks</div><div class="t" style="left:513px;top:707.34px;font-size:14.6px;line-height:16px;color:#000;font-weight:normal;">10/07/25</div><div class="t" style="left:595px;top:707.34px;font-size:14.6px;line-height:16px;color:#000;font-weight:normal;">10/09/25</div><div style="position:absolute;left:0px;top:733px;width:881px;height:28px;background:#fff"></div><div style="position:absolute;left:0px;top:761px;width:881px;height:1px;background:#dddddd"></div><svg style="left:0;top:734px;overflow:hidden" width="9" height="26"><path d="M-1 1.00 L1.00 -1 M-1 4.25 L4.25 -1 M-1 7.50 L7.50 -1 M-1 10.75 L10.75 -1 M-1 14.00 L14.00 -1 M-1 17.25 L17.25 -1 M-1 20.50 L20.50 -1 M-1 23.75 L23.75 -1 M-1 27.00 L27.00 -1 M-1 30.25 L30.25 -1 M-1 33.50 L33.50 -1 M-1 36.75 L36.75 -1 M-1 40.00 L40.00 -1 " stroke="#cecece" stroke-width="1.25" fill="none"/></svg><div class="t" style="left:0px;width:42px;text-align:right;top:740.7px;font-size:12.5px;line-height:13px;color:#c4c4c4">18</div><div style="position:absolute;left:46px;top:733px;width:1px;height:28px;background:#dddddd"></div><div style="position:absolute;left:68px;top:733px;width:1px;height:28px;background:#dddddd"></div><div style="position:absolute;left:92px;top:733px;width:1px;height:28px;background:#dddddd"></div><div style="position:absolute;left:115px;top:733px;width:1px;height:28px;background:#dddddd"></div><div style="position:absolute;left:138px;top:733px;width:1px;height:28px;background:#dddddd"></div><div style="position:absolute;left:188px;top:733px;width:1px;height:28px;background:#dddddd"></div><div style="position:absolute;left:505px;top:733px;width:1px;height:28px;background:#dddddd"></div><div style="position:absolute;left:587px;top:733px;width:1px;height:28px;background:#dddddd"></div><div style="position:absolute;left:669px;top:733px;width:1px;height:28px;background:#dddddd"></div><div style="position:absolute;left:814px;top:733px;width:1px;height:28px;background:#dddddd"></div><div style="position:absolute;left:878px;top:733px;width:1px;height:28px;background:#dddddd"></div><div class="t" style="left:251px;top:736.34px;font-size:14.6px;line-height:16px;color:#000;font-weight:normal;">Backfill</div><div class="t" style="left:513px;top:736.34px;font-size:14.6px;line-height:16px;color:#000;font-weight:normal;">10/10/25</div><div class="t" style="left:595px;top:736.34px;font-size:14.6px;line-height:16px;color:#000;font-weight:normal;">10/10/25</div><div style="position:absolute;left:0px;top:762px;width:881px;height:28px;background:#fff"></div><div style="position:absolute;left:139px;top:762px;width:742px;height:28px;background:#b9dcf9"></div><div style="position:absolute;left:0px;top:790px;width:881px;height:1px;background:#dddddd"></div><svg style="left:0;top:763px;overflow:hidden" width="9" height="26"><path d="M-1 1.00 L1.00 -1 M-1 4.25 L4.25 -1 M-1 7.50 L7.50 -1 M-1 10.75 L10.75 -1 M-1 14.00 L14.00 -1 M-1 17.25 L17.25 -1 M-1 20.50 L20.50 -1 M-1 23.75 L23.75 -1 M-1 27.00 L27.00 -1 M-1 30.25 L30.25 -1 M-1 33.50 L33.50 -1 M-1 36.75 L36.75 -1 M-1 40.00 L40.00 -1 " stroke="#cecece" stroke-width="1.25" fill="none"/></svg><div class="t" style="left:0px;width:42px;text-align:right;top:769.7px;font-size:12.5px;line-height:13px;color:#c4c4c4">19</div><div style="position:absolute;left:46px;top:762px;width:1px;height:28px;background:#dddddd"></div><div style="position:absolute;left:68px;top:762px;width:1px;height:28px;background:#dddddd"></div><div style="position:absolute;left:92px;top:762px;width:1px;height:28px;background:#dddddd"></div><div style="position:absolute;left:115px;top:762px;width:1px;height:28px;background:#dddddd"></div><div style="position:absolute;left:138px;top:762px;width:1px;height:28px;background:#dddddd"></div><div style="position:absolute;left:188px;top:762px;width:1px;height:28px;background:#dddddd"></div><div style="position:absolute;left:505px;top:762px;width:1px;height:28px;background:#dddddd"></div><div style="position:absolute;left:587px;top:762px;width:1px;height:28px;background:#dddddd"></div><div style="position:absolute;left:669px;top:762px;width:1px;height:28px;background:#dddddd"></div><div style="position:absolute;left:814px;top:762px;width:1px;height:28px;background:#dddddd"></div><div style="position:absolute;left:878px;top:762px;width:1px;height:28px;background:#dddddd"></div><div class="t" style="left:235px;top:764.54px;font-size:14.6px;line-height:16px;color:#000;font-weight:bold;">Framing</div><div class="t" style="left:513px;top:764.54px;font-size:14.6px;line-height:16px;color:#000;font-weight:bold;">10/08/25</div><div class="t" style="left:595px;top:764.54px;font-size:14.6px;line-height:16px;color:#000;font-weight:bold;">10/15/25</div><div style="position:absolute;left:214px;top:767px;width:14px;height:13px;background:#e2e2e2;border:1px solid #c4c4c4;border-radius:3px"><div style="position:absolute;left:2.5px;top:4.2px;width:7px;height:2px;background:#555"></div><div style="position:absolute;left:5px;top:1.7px;width:2px;height:7px;background:#555"></div></div><svg style="left:120px;top:769.0px" width="12" height="13"><path d="M3 6 V4 Q3 1 6 1 Q9 1 9 4 V6" fill="none" stroke="#555" stroke-width="1.3"/><rect x="0.7" y="6" width="10.6" height="6.3" rx="1" fill="none" stroke="#555" stroke-width="1.3"/></svg><div style="position:absolute;left:881px;top:139px;width:1px;height:651px;background:#d0d0d0"></div><div style="position:absolute;left:882px;top:139px;width:2px;height:651px;background:#fbfbfb"></div><div style="position:absolute;left:884px;top:139px;width:1px;height:651px;background:#d0d0d0"></div><div style="position:absolute;left:885px;top:139px;width:506px;height:44px;background:#e4e4e4"></div><div style="position:absolute;left:885px;top:161px;width:506px;height:1px;background:#d2d2d2"></div><div style="position:absolute;left:885px;top:183px;width:506px;height:1px;background:#d2d2d2"></div><div style="position:absolute;left:885px;top:184px;width:506px;height:17px;background:#f2f2f2"></div><div style="position:absolute;left:885px;top:201px;width:506px;height:1px;background:#cdcdcd"></div><div style="position:absolute;left:888px;top:162px;width:1px;height:21px;background:#d2d2d2"></div><div style="position:absolute;left:888px;top:139px;width:1px;height:22px;background:#d2d2d2"></div><div class="t" style="left:891.00px;width:20px;text-align:center;top:164.24px;font-size:13.75px;line-height:16px;color:#444">S</div><div style="position:absolute;left:913px;top:162px;width:1px;height:21px;background:#d2d2d2"></div><div class="t" style="left:915.50px;width:20px;text-align:center;top:164.24px;font-size:13.75px;line-height:16px;color:#444">M</div><div style="position:absolute;left:937px;top:162px;width:1px;height:21px;background:#d2d2d2"></div><div class="t" style="left:939.50px;width:20px;text-align:center;top:164.24px;font-size:13.75px;line-height:16px;color:#444">T</div><div style="position:absolute;left:961px;top:162px;width:1px;height:21px;background:#d2d2d2"></div><div class="t" style="left:963.50px;width:20px;text-align:center;top:164.24px;font-size:13.75px;line-height:16px;color:#444">W</div><div style="position:absolute;left:985px;top:162px;width:1px;height:21px;background:#d2d2d2"></div><div class="t" style="left:987.50px;width:20px;text-align:center;top:164.24px;font-size:13.75px;line-height:16px;color:#444">T</div><div style="position:absolute;left:1009px;top:162px;width:1px;height:21px;background:#d2d2d2"></div><div class="t" style="left:1012.00px;width:20px;text-align:center;top:164.24px;font-size:13.75px;line-height:16px;color:#444">F</div><div style="position:absolute;left:1034px;top:162px;width:1px;height:21px;background:#d2d2d2"></div><div class="t" style="left:1036.50px;width:20px;text-align:center;top:164.24px;font-size:13.75px;line-height:16px;color:#444">S</div><div style="position:absolute;left:1058px;top:162px;width:1px;height:21px;background:#d2d2d2"></div><div style="position:absolute;left:1058px;top:139px;width:1px;height:22px;background:#d2d2d2"></div><div class="t" style="left:1060.50px;width:20px;text-align:center;top:164.24px;font-size:13.75px;line-height:16px;color:#444">S</div><div style="position:absolute;left:1082px;top:162px;width:1px;height:21px;background:#d2d2d2"></div><div class="t" style="left:1084.50px;width:20px;text-align:center;top:164.24px;font-size:13.75px;line-height:16px;color:#444">M</div><div style="position:absolute;left:1106px;top:162px;width:1px;height:21px;background:#d2d2d2"></div><div class="t" style="left:1108.50px;width:20px;text-align:center;top:164.24px;font-size:13.75px;line-height:16px;color:#444">T</div><div style="position:absolute;left:1130px;top:162px;width:1px;height:21px;background:#d2d2d2"></div><div class="t" style="left:1133.00px;width:20px;text-align:center;top:164.24px;font-size:13.75px;line-height:16px;color:#444">W</div><div style="position:absolute;left:1155px;top:162px;width:1px;height:21px;background:#d2d2d2"></div><div class="t" style="left:1157.50px;width:20px;text-align:center;top:164.24px;font-size:13.75px;line-height:16px;color:#444">T</div><div style="position:absolute;left:1179px;top:162px;width:1px;height:21px;background:#d2d2d2"></div><div class="t" style="left:1181.50px;width:20px;text-align:center;top:164.24px;font-size:13.75px;line-height:16px;color:#444">F</div><div style="position:absolute;left:1203px;top:162px;width:1px;height:21px;background:#d2d2d2"></div><div class="t" style="left:1205.50px;width:20px;text-align:center;top:164.24px;font-size:13.75px;line-height:16px;color:#444">S</div><div style="position:absolute;left:1227px;top:162px;width:1px;height:21px;background:#d2d2d2"></div><div style="position:absolute;left:1227px;top:139px;width:1px;height:22px;background:#d2d2d2"></div><div class="t" style="left:1229.50px;width:20px;text-align:center;top:164.24px;font-size:13.75px;line-height:16px;color:#444">S</div><div style="position:absolute;left:1251px;top:162px;width:1px;height:21px;background:#d2d2d2"></div><div class="t" style="left:1254.00px;width:20px;text-align:center;top:164.24px;font-size:13.75px;line-height:16px;color:#444">M</div><div style="position:absolute;left:1276px;top:162px;width:1px;height:21px;background:#d2d2d2"></div><div class="t" style="left:1278.50px;width:20px;text-align:center;top:164.24px;font-size:13.75px;line-height:16px;color:#444">T</div><div style="position:absolute;left:1300px;top:162px;width:1px;height:21px;background:#d2d2d2"></div><div class="t" style="left:1302.50px;width:20px;text-align:center;top:164.24px;font-size:13.75px;line-height:16px;color:#444">W</div><div style="position:absolute;left:1324px;top:162px;width:1px;height:21px;background:#d2d2d2"></div><div class="t" style="left:1326.50px;width:20px;text-align:center;top:164.24px;font-size:13.75px;line-height:16px;color:#444">T</div><div style="position:absolute;left:1348px;top:162px;width:1px;height:21px;background:#d2d2d2"></div><div class="t" style="left:1350.50px;width:20px;text-align:center;top:164.24px;font-size:13.75px;line-height:16px;color:#444">F</div><div style="position:absolute;left:1372px;top:162px;width:1px;height:21px;background:#d2d2d2"></div><div class="t" style="left:1374.50px;width:20px;text-align:center;top:164.24px;font-size:13.75px;line-height:16px;color:#444">S</div><div class="t" style="left:933.50px;width:80px;text-align:center;top:142.24px;font-size:13.75px;letter-spacing:-0.35px;line-height:16px;color:#444">Sep 21</div><div class="t" style="left:1103.00px;width:80px;text-align:center;top:142.24px;font-size:13.75px;letter-spacing:-0.35px;line-height:16px;color:#444">Sep 28</div><div class="t" style="left:1272.00px;width:80px;text-align:center;top:142.24px;font-size:13.75px;letter-spacing:-0.35px;line-height:16px;color:#444">Oct 5</div><svg style="left:1375px;top:188px" width="9" height="9"><path d="M0.8 0.8 L8.2 8.2 M8.2 0.8 L0.8 8.2" stroke="#333" stroke-width="1.6"/></svg><div class="a" style="left:885px;top:202px;width:487px;height:588px;overflow:hidden"><div style="position:absolute;left:0.00px;top:0.00px;width:487.00px;height:588.00px;background:#fff"></div><div style="position:absolute;left:4.00px;top:0.00px;width:24.00px;height:588.00px;background:#f4f4f4"></div><div style="position:absolute;left:150.00px;top:0.00px;width:23.00px;height:588.00px;background:#f4f4f4"></div><div style="position:absolute;left:174.00px;top:0.00px;width:23.00px;height:588.00px;background:#f4f4f4"></div><div style="position:absolute;left:319.00px;top:0.00px;width:23.00px;height:588.00px;background:#f4f4f4"></div><div style="position:absolute;left:343.00px;top:0.00px;width:23.00px;height:588.00px;background:#f4f4f4"></div><div style="position:absolute;left:488.00px;top:0.00px;width:23.00px;height:588.00px;background:#f4f4f4"></div><div style="position:absolute;left:512.00px;top:0.00px;width:24.00px;height:588.00px;background:#f4f4f4"></div><div style="position:absolute;left:3.00px;top:0.00px;width:1.00px;height:588.00px;background:#cfcfcf"></div><div style="position:absolute;left:28.00px;top:0.00px;width:1.00px;height:588.00px;background:#e4e4e4"></div><div style="position:absolute;left:52.00px;top:0.00px;width:1.00px;height:588.00px;background:#e4e4e4"></div><div style="position:absolute;left:76.00px;top:0.00px;width:1.00px;height:588.00px;background:#e4e4e4"></div><div style="position:absolute;left:100.00px;top:0.00px;width:1.00px;height:588.00px;background:#e4e4e4"></div><div style="position:absolute;left:124.00px;top:0.00px;width:1.00px;height:588.00px;background:#e4e4e4"></div><div style="position:absolute;left:149.00px;top:0.00px;width:1.00px;height:588.00px;background:#e4e4e4"></div><div style="position:absolute;left:173.00px;top:0.00px;width:1.00px;height:588.00px;background:#cfcfcf"></div><div style="position:absolute;left:197.00px;top:0.00px;width:1.00px;height:588.00px;background:#e4e4e4"></div><div style="position:absolute;left:221.00px;top:0.00px;width:1.00px;height:588.00px;background:#e4e4e4"></div><div style="position:absolute;left:245.00px;top:0.00px;width:1.00px;height:588.00px;background:#e4e4e4"></div><div style="position:absolute;left:270.00px;top:0.00px;width:1.00px;height:588.00px;background:#e4e4e4"></div><div style="position:absolute;left:294.00px;top:0.00px;width:1.00px;height:588.00px;background:#e4e4e4"></div><div style="position:absolute;left:318.00px;top:0.00px;width:1.00px;height:588.00px;background:#e4e4e4"></div><div style="position:absolute;left:342.00px;top:0.00px;width:1.00px;height:588.00px;background:#cfcfcf"></div><div style="position:absolute;left:366.00px;top:0.00px;width:1.00px;height:588.00px;background:#e4e4e4"></div><div style="position:absolute;left:391.00px;top:0.00px;width:1.00px;height:588.00px;background:#e4e4e4"></div><div style="position:absolute;left:415.00px;top:0.00px;width:1.00px;height:588.00px;background:#e4e4e4"></div><div style="position:absolute;left:439.00px;top:0.00px;width:1.00px;height:588.00px;background:#e4e4e4"></div><div style="position:absolute;left:463.00px;top:0.00px;width:1.00px;height:588.00px;background:#e4e4e4"></div><div style="position:absolute;left:487.00px;top:0.00px;width:1.00px;height:588.00px;background:#e4e4e4"></div><div style="position:absolute;left:511.00px;top:0.00px;width:1.00px;height:588.00px;background:#cfcfcf"></div><div style="position:absolute;left:0.00px;top:1.00px;width:487.00px;height:29.00px;background:#0a337b"></div><div style="position:absolute;left:0.00px;top:30.00px;width:487.00px;height:1.00px;background:#dddddd"></div><div style="position:absolute;left:0.00px;top:31.00px;width:487.00px;height:28.00px;background:#b9dcf9"></div><div style="position:absolute;left:0.00px;top:59.00px;width:487.00px;height:1.00px;background:#dddddd"></div><div style="position:absolute;left:0.00px;top:88.00px;width:487.00px;height:1.00px;background:#dddddd"></div><div style="position:absolute;left:0.00px;top:129.00px;width:487.00px;height:1.00px;background:#dddddd"></div><div style="position:absolute;left:0.00px;top:158.00px;width:487.00px;height:1.00px;background:#dddddd"></div><div style="position:absolute;left:0.00px;top:159.00px;width:487.00px;height:28.00px;background:#b9dcf9"></div><div style="position:absolute;left:0.00px;top:187.00px;width:487.00px;height:1.00px;background:#dddddd"></div><div style="position:absolute;left:0.00px;top:216.00px;width:487.00px;height:1.00px;background:#dddddd"></div><div style="position:absolute;left:0.00px;top:257.00px;width:487.00px;height:1.00px;background:#dddddd"></div><div style="position:absolute;left:0.00px;top:286.00px;width:487.00px;height:1.00px;background:#dddddd"></div><div style="position:absolute;left:0.00px;top:327.00px;width:487.00px;height:1.00px;background:#dddddd"></div><div style="position:absolute;left:0.00px;top:356.00px;width:487.00px;height:1.00px;background:#dddddd"></div><div style="position:absolute;left:0.00px;top:357.00px;width:487.00px;height:28.00px;background:#b9dcf9"></div><div style="position:absolute;left:0.00px;top:385.00px;width:487.00px;height:1.00px;background:#dddddd"></div><div style="position:absolute;left:0.00px;top:414.00px;width:487.00px;height:1.00px;background:#dddddd"></div><div style="position:absolute;left:0.00px;top:443.00px;width:487.00px;height:1.00px;background:#dddddd"></div><div style="position:absolute;left:0.00px;top:444.00px;width:487.00px;height:28.00px;background:#b9dcf9"></div><div style="position:absolute;left:0.00px;top:472.00px;width:487.00px;height:1.00px;background:#dddddd"></div><div style="position:absolute;left:0.00px;top:501.00px;width:487.00px;height:1.00px;background:#dddddd"></div><div style="position:absolute;left:0.00px;top:530.00px;width:487.00px;height:1.00px;background:#dddddd"></div><div style="position:absolute;left:0.00px;top:559.00px;width:487.00px;height:1.00px;background:#dddddd"></div><div style="position:absolute;left:0.00px;top:560.00px;width:487.00px;height:28.00px;background:#b9dcf9"></div><div style="position:absolute;left:0.00px;top:588.00px;width:487.00px;height:1.00px;background:#dddddd"></div><svg style="left:3px;top:6px" width="775" height="20"><path d="M0.5 0.5 H774.5 V18.5 L767.5 11.5 H7.5 L0.5 18.5Z" fill="#cccccc" stroke="#a2a2a2" stroke-width="1"/><rect x="2" y="2.5" width="154.50" height="7" fill="#e7e7e7" stroke="#a9a9a9" stroke-width="1"/></svg><svg style="left:3px;top:36px" width="242" height="20"><path d="M0.5 0.5 H241.5 V18.5 L234.5 11.5 H7.5 L0.5 18.5Z" fill="#cccccc" stroke="#a2a2a2" stroke-width="1"/><rect x="2" y="2.5" width="202.78" height="7" fill="#e7e7e7" stroke="#a9a9a9" stroke-width="1"/></svg><div style="position:absolute;white-space:nowrap;left:250.50px;top:33.13px;font-size:11.75px;line-height:16px;color:#333">Development</div><svg style="left:3px;top:65px" width="25" height="15"><rect x="0.5" y="0.5" width="24" height="14" fill="#c5e5f8" stroke="#b4b4b4" stroke-width="1"/><rect x="1" y="3" width="23.50" height="9" fill="#e1f1fb"/><rect x="1" y="3" width="23.50" height="1" fill="#9fb2bd"/><rect x="1" y="11" width="23.50" height="1" fill="#9fb2bd"/></svg><div style="position:absolute;white-space:nowrap;left:33.50px;top:62.13px;font-size:11.75px;line-height:16px;color:#333">Final estimate complete</div><svg style="left:28px;top:94px" width="193" height="15"><rect x="0.5" y="0.5" width="192" height="14" fill="#c5e5f8" stroke="#b4b4b4" stroke-width="1"/><rect x="1" y="3" width="149.04" height="9" fill="#e1f1fb"/><rect x="1" y="3" width="149.04" height="1" fill="#9fb2bd"/><rect x="1" y="11" width="149.04" height="1" fill="#9fb2bd"/><rect x="149.04" y="3" width="1" height="9" fill="#9fb2bd"/></svg><div style="position:absolute;white-space:nowrap;left:226.50px;top:91.13px;font-size:11.75px;line-height:16px;color:#333">Contract Signed</div><svg style="left:221px;top:135px" width="24" height="15"><rect x="0.5" y="0.5" width="23" height="14" fill="#c5e5f8" stroke="#b4b4b4" stroke-width="1"/><rect x="1" y="3" width="22.50" height="9" fill="#e1f1fb"/><rect x="1" y="3" width="22.50" height="1" fill="#9fb2bd"/><rect x="1" y="11" width="22.50" height="1" fill="#9fb2bd"/></svg><div style="position:absolute;white-space:nowrap;left:250.50px;top:132.13px;font-size:11.75px;line-height:16px;color:#333">Permission to schedule work?</div><svg style="left:245px;top:164px" width="146" height="20"><path d="M0.5 0.5 H145.5 V18.5 L138.5 11.5 H7.5 L0.5 18.5Z" fill="#cccccc" stroke="#a2a2a2" stroke-width="1"/><rect x="2" y="2.5" width="19.94" height="7" fill="#e7e7e7" stroke="#a9a9a9" stroke-width="1"/></svg><div style="position:absolute;white-space:nowrap;left:396.50px;top:161.13px;font-size:11.75px;line-height:16px;color:#333">Site Planning</div><svg style="left:245px;top:193px" width="25" height="15"><rect x="0.5" y="0.5" width="24" height="14" fill="#c5e5f8" stroke="#b4b4b4" stroke-width="1"/><rect x="1" y="3" width="13.50" height="9" fill="#e1f1fb"/><rect x="1" y="3" width="13.50" height="1" fill="#9fb2bd"/><rect x="1" y="11" width="13.50" height="1" fill="#9fb2bd"/><rect x="13.50" y="3" width="1" height="9" fill="#9fb2bd"/></svg><div style="position:absolute;white-space:nowrap;left:275.50px;top:190.13px;font-size:11.75px;line-height:16px;color:#333">Appliance, fixture &amp; salvage</div><svg style="left:270px;top:222px" width="24" height="15"><rect x="0.5" y="0.5" width="23" height="14" fill="#c5e5f8" stroke="#b4b4b4" stroke-width="1"/><rect x="1" y="3" width="4.50" height="9" fill="#e1f1fb"/><rect x="1" y="3" width="4.50" height="1" fill="#9fb2bd"/><rect x="1" y="11" width="4.50" height="1" fill="#9fb2bd"/><rect x="4.50" y="3" width="1" height="9" fill="#9fb2bd"/></svg><div style="position:absolute;white-space:nowrap;left:299.50px;top:219.13px;font-size:11.75px;line-height:16px;color:#333">Electrical- Cut power &amp; Install temp service</div><svg style="left:294px;top:263px" width="24" height="15"><rect x="0.5" y="0.5" width="23" height="14" fill="#c5e5f8" stroke="#b4b4b4" stroke-width="1"/></svg><div style="position:absolute;white-space:nowrap;left:323.50px;top:260.13px;font-size:11.75px;line-height:16px;color:#333">Safety Fence delivery/setup</div><svg style="left:294px;top:292px" width="97" height="15"><rect x="0.5" y="0.5" width="96" height="14" fill="#c5e5f8" stroke="#b4b4b4" stroke-width="1"/></svg><div style="position:absolute;white-space:nowrap;left:396.50px;top:289.13px;font-size:11.75px;line-height:16px;color:#333">Install office/safety area (plans desk,first aid,phone)</div><svg style="left:366px;top:333px" width="25" height="15"><rect x="0.5" y="0.5" width="24" height="14" fill="#c5e5f8" stroke="#b4b4b4" stroke-width="1"/></svg><div style="position:absolute;white-space:nowrap;left:396.50px;top:330.13px;font-size:11.75px;line-height:16px;color:#333">Install site camera(s)</div><svg style="left:366px;top:362px" width="218" height="20"><path d="M0.5 0.5 H217.5 V18.5 L210.5 11.5 H7.5 L0.5 18.5Z" fill="#cccccc" stroke="#a2a2a2" stroke-width="1"/></svg><div style="position:absolute;white-space:nowrap;left:589.50px;top:359.13px;font-size:11.75px;line-height:16px;color:#333">Utilities</div><svg style="left:366px;top:391px" width="97" height="15"><rect x="0.5" y="0.5" width="96" height="14" fill="#c5e5f8" stroke="#b4b4b4" stroke-width="1"/></svg><div style="position:absolute;white-space:nowrap;left:468.50px;top:388.13px;font-size:11.75px;line-height:16px;color:#333">Scrap the upper two floors</div><svg style="left:463px;top:420px" width="121" height="15"><rect x="0.5" y="0.5" width="120" height="14" fill="#c5e5f8" stroke="#b4b4b4" stroke-width="1"/></svg><div style="position:absolute;white-space:nowrap;left:589.50px;top:417.13px;font-size:11.75px;line-height:16px;color:#333">basement demolition</div><svg style="left:391px;top:449px" width="96" height="20"><path d="M0.5 0.5 H95.5 V18.5 L88.5 11.5 H7.5 L0.5 18.5Z" fill="#cccccc" stroke="#a2a2a2" stroke-width="1"/></svg><div style="position:absolute;white-space:nowrap;left:492.50px;top:446.13px;font-size:11.75px;line-height:16px;color:#333">Foundation</div><svg style="left:391px;top:478px" width="72" height="15"><rect x="0.5" y="0.5" width="71" height="14" fill="#c5e5f8" stroke="#b4b4b4" stroke-width="1"/></svg><div style="position:absolute;white-space:nowrap;left:468.50px;top:475.13px;font-size:11.75px;line-height:16px;color:#333">Foundation prep</div><svg style="left:391px;top:507px" width="72" height="15"><rect x="0.5" y="0.5" width="71" height="14" fill="#c5e5f8" stroke="#b4b4b4" stroke-width="1"/></svg><div style="position:absolute;white-space:nowrap;left:468.50px;top:504.13px;font-size:11.75px;line-height:16px;color:#333">Oil Tanks</div><svg style="left:463px;top:536px" width="24" height="15"><rect x="0.5" y="0.5" width="23" height="14" fill="#c5e5f8" stroke="#b4b4b4" stroke-width="1"/></svg><div style="position:absolute;white-space:nowrap;left:492.50px;top:533.13px;font-size:11.75px;line-height:16px;color:#333">Backfill</div><svg style="left:415px;top:565px" width="193" height="20"><path d="M0.5 0.5 H192.5 V18.5 L185.5 11.5 H7.5 L0.5 18.5Z" fill="#cccccc" stroke="#a2a2a2" stroke-width="1"/></svg><div style="position:absolute;white-space:nowrap;left:613.50px;top:562.13px;font-size:11.75px;line-height:16px;color:#333">Framing</div><svg style="left:0;top:0" width="487" height="588"><path d="M220 106.5 H225.5 V130.0" fill="none" stroke="#333" stroke-width="1"/><path d="M222.5 129.3 H228.5 L225.5 132.5Z" fill="#333"/></svg><svg style="left:0;top:0" width="487" height="588"><path d="M244 147.5 H249.5 V188.0" fill="none" stroke="#333" stroke-width="1"/><path d="M246.5 187.3 H252.5 L249.5 190.5Z" fill="#333"/></svg><svg style="left:0;top:0" width="487" height="588"><path d="M269 205.5 H273.5 V217.0" fill="none" stroke="#333" stroke-width="1"/><path d="M270.5 216.3 H276.5 L273.5 219.5Z" fill="#333"/></svg><svg style="left:0;top:0" width="487" height="588"><path d="M293 234.5 H297.5 V258.0" fill="none" stroke="#333" stroke-width="1"/><path d="M294.5 257.3 H300.5 L297.5 260.5Z" fill="#333"/></svg><svg style="left:0;top:0" width="487" height="588"><path d="M317 275.5 H370.5 V328.0" fill="none" stroke="#333" stroke-width="1"/><path d="M367.5 327.3 H373.5 L370.5 330.5Z" fill="#333"/></svg><svg style="left:0;top:0" width="487" height="588"><path d="M462 403.5 H467.5 V415.0" fill="none" stroke="#333" stroke-width="1"/><path d="M464.5 414.3 H470.5 L467.5 417.5Z" fill="#333"/></svg><svg style="left:0;top:0" width="487" height="588"><path d="M462 519.5 H467.5 V531.0" fill="none" stroke="#333" stroke-width="1"/><path d="M464.5 530.3 H470.5 L467.5 533.5Z" fill="#333"/></svg><div style="position:absolute;left:0.00px;top:0.00px;width:487.00px;height:1.00px;background:#fff"></div></div><div style="position:absolute;left:1372px;top:202px;width:19px;height:588px;background:#fff"></div><div style="position:absolute;left:1391px;top:139px;width:1px;height:651px;background:#e2e2e2"></div><div style="position:absolute;left:1392px;top:139px;width:42px;height:651px;background:#f2f2f2"></div><svg style="left:1406px;top:154px" width="15" height="14"><path d="M0.7 0.7 H13.3 V10 H10.5 L11 12.5 L8.2 10 H0.7Z" fill="#fff" stroke="#5a5a5a" stroke-width="1.4" stroke-linejoin="round"/></svg><svg style="left:1409px;top:194px" width="10" height="15"><path d="M7.6 5 V10.5 Q7.6 13.6 4.6 13.6 Q1.6 13.6 1.6 10.5 V3.8 Q1.6 1 3.9 1 Q6.2 1 6.2 3.8 V10 Q6.2 11.6 4.7 11.6 Q3.2 11.6 3.2 10 V5" fill="none" stroke="#5a5a5a" stroke-width="1.2"/></svg><svg style="left:1406px;top:234px" width="20" height="16"><rect x="0.7" y="5.6" width="13" height="8.9" fill="#fff" stroke="#5a5a5a" stroke-width="1.4"/><path d="M0.8 5.8 L7.2 10.5 L13.6 5.8" fill="none" stroke="#5a5a5a" stroke-width="1.3"/><circle cx="13" cy="5.6" r="5" fill="#2684e8"/><text x="13" y="8.9" text-anchor="middle" font-family="Liberation Sans" font-size="8.5" font-weight="bold" fill="#fff">?</text></svg><svg style="left:1406px;top:278px" width="15" height="15"><circle cx="7" cy="7" r="7.1" fill="#2684e8"/><path d="M4.3 2.4 Q6.3 1.6 7.4 2.9 Q6.2 3.9 6.6 5.2 Q8 6 7.6 7.2 Q5.6 7.3 4.6 5.8 Q3.6 4.2 4.3 2.4Z" fill="#fff"/><path d="M7.4 7.9 Q9.6 7.9 10.6 9.6 Q10.6 11.6 8.8 13.2 Q8.2 11.6 7.6 10.4 Q6.9 9.1 7.4 7.9Z" fill="#fff"/></svg><svg style="left:1405px;top:320px" width="17" height="15"><rect x="0" y="3.2" width="5.3" height="1.5" fill="#5a5a5a"/><rect x="10.5" y="3.2" width="5.7" height="1.5" fill="#5a5a5a"/><rect x="0" y="10.3" width="6.5" height="1.5" fill="#5a5a5a"/><rect x="13.3" y="10.3" width="2.9" height="1.5" fill="#5a5a5a"/><path d="M0 7.3 H6.5 L8 1.5 L10.6 13 L12.2 7.3 H16.2" fill="none" stroke="#2684e8" stroke-width="1.4" stroke-linejoin="round"/></svg><svg style="left:1405px;top:362px" width="15" height="16"><path d="M2.8 0.7 H13.3 V13 Q10.5 12.2 8.5 13.4 Q6 14.6 2.8 14.2Z" fill="#fff" stroke="#5a5a5a" stroke-width="1.3"/><rect x="0" y="2.2" width="5.8" height="10.8" rx="1" fill="#2684e8"/><rect x="1.3" y="4.2" width="3.2" height="1" fill="#fff"/><rect x="1.3" y="6.7" width="3.2" height="1" fill="#fff"/><rect x="1.3" y="9.2" width="3.2" height="1" fill="#fff"/></svg><div style="position:absolute;left:1399px;top:390px;width:28px;height:1px;background:#dedede"></div><svg style="left:1405px;top:405px" width="15" height="15"><rect x="0" y="0" width="7" height="7" fill="#7b7b7b"/><rect x="8" y="0" width="7" height="7" fill="#7b7b7b"/><rect x="0" y="8" width="7" height="7" fill="#7b7b7b"/><rect x="8" y="8" width="7" height="7" fill="#7b7b7b"/></svg><svg style="left:1405px;top:446px" width="15" height="15"><path d="M7.5 0.3 H14.7 V7.5 L12.6 6 V2.4 H9Z" fill="#7b7b7b"/><path d="M4.5 3.3 H11.7 V10.5 L9.6 9 V5.4 H6Z" fill="#7b7b7b"/><path d="M0.3 7.5 H8.5 V14.7 L6.4 13.2 V9.6 H2Z" fill="#7b7b7b"/></svg><svg style="left:1404px;top:488px" width="19" height="13"><path d="M3.5 11.5 Q0.2 11.5 0.5 8 Q0.5 5.5 3 5 Q3.5 1.5 7.3 2 Q9 0 11.5 1.5 Q14.5 0.8 15.5 3.5 Q18.5 4.3 18.2 7.5 Q18 10.5 14.5 10.5 Q13 12.5 10 11.5 Q7.5 13 5.5 11.8Z" fill="#7b7b7b"/></svg></body></html>
